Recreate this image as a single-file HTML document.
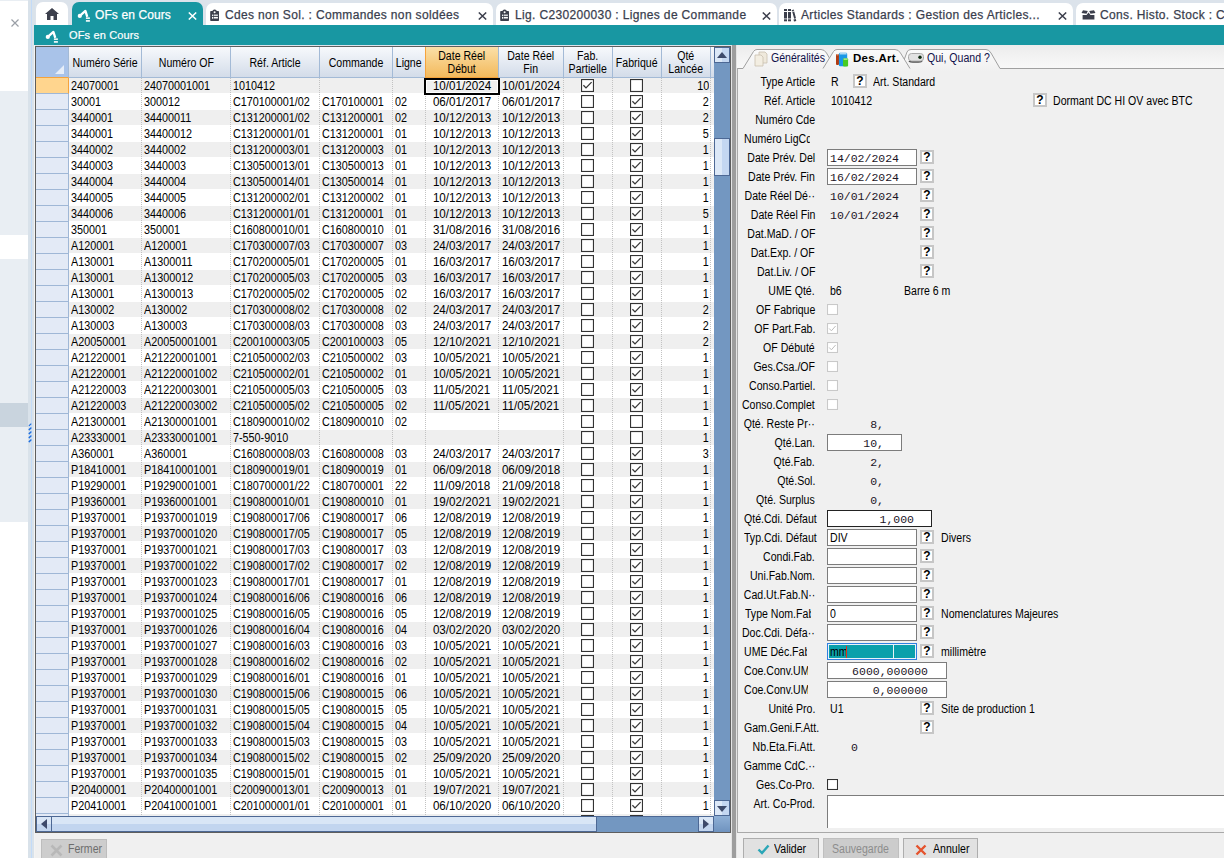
<!DOCTYPE html>
<html><head><meta charset="utf-8"><title>OFs en Cours</title>
<style>
*{box-sizing:border-box}
html,body{margin:0;padding:0}
body{width:1224px;height:858px;position:relative;overflow:hidden;background:#dce3eb;font-family:"Liberation Sans",sans-serif;color:#000}
.ab{position:absolute}
.s{display:inline-block;white-space:nowrap}
.tab{position:absolute;top:2px;height:23px;background:#fff;border-radius:7px 7px 0 0;font-size:12px;letter-spacing:.35px;color:#3a3e4e;white-space:nowrap;overflow:hidden}
.tab .t{position:absolute;top:5px;-webkit-text-stroke:.25px currentColor}
.tab .x{position:absolute;top:4px;font-size:13px;color:#444;letter-spacing:0}
.g{font-size:12px;white-space:nowrap}
.r{position:absolute;left:69px;width:645px;height:16px;border-top:1px solid #fff}
.c{position:absolute;top:1px;overflow:hidden}
.rh{position:absolute;left:36px;width:33px;height:16px;background:#e3eaf6;border-bottom:1px solid #9fb7d6}
.hd{position:absolute;top:47px;height:31px;background:linear-gradient(#f7f9fc,#d3dce9);border-right:1px solid #a3bad6;border-bottom:1px solid #a3bad6;font-size:12px;text-align:center;line-height:13px;padding-top:2px;display:flex;align-items:center;justify-content:center}
.lbl{position:absolute;left:738px;width:77px;text-align:right;font-size:11px;white-space:nowrap;overflow:hidden}
.fv{position:absolute;font-size:11px;white-space:nowrap}
.q{position:absolute;width:14px;height:15px;background:#fff;border:2px solid #c8c8c8;font:bold 11px "Liberation Sans",sans-serif;text-align:center;line-height:11px}
.in{position:absolute;height:18px;background:#fff;border:1px solid #7a7a7a}
.mono{font-family:"Liberation Mono",monospace;font-size:11px;color:#402040}
</style></head><body>

<div class="ab" style="left:0;top:0;width:28px;height:858px;background:#e9eef3"></div>
<div class="ab" style="left:0;top:1px;width:28px;height:90px;background:#fff"></div>
<div class="ab" style="left:0;top:235px;width:28px;height:24px;background:#fff"></div>
<div class="ab" style="left:0;top:403px;width:28px;height:24px;background:#c9d4de"></div>
<div class="ab" style="left:0;top:522px;width:28px;height:336px;background:#fff"></div>
<svg class="ab" style="left:10px;top:18px" width="10" height="10"><path d="M1.5 1.5L8.5 8.5M8.5 1.5L1.5 8.5" stroke="#9a9fa6" stroke-width="1.2"/></svg>
<div class="ab" style="left:28px;top:0;width:7px;height:858px;background:#d9e2ea"></div>
<div class="ab" style="left:34px;top:45px;width:1px;height:813px;background:#f3f3f3"></div>
<div class="ab" style="left:31px;top:0;width:1px;height:858px;background:#c3dbf8"></div>
<svg class="ab" style="left:28px;top:421px" width="5" height="24"><path d="M1.2 4.6 L2.9 3.0" stroke="#1f6fe0" stroke-width="1.15" stroke-linecap="round"/><path d="M1.2 8.6 L2.9 7.0" stroke="#1f6fe0" stroke-width="1.5" stroke-linecap="round"/><path d="M1.2 12.6 L2.9 11.0" stroke="#1f6fe0" stroke-width="1.5" stroke-linecap="round"/><path d="M1.2 16.6 L2.9 15.0" stroke="#1f6fe0" stroke-width="1.5" stroke-linecap="round"/><path d="M1.2 20.6 L2.9 19.0" stroke="#1f6fe0" stroke-width="1.5" stroke-linecap="round"/></svg>
<div class="ab" style="left:35px;top:0;width:1189px;height:25px;background:#dce3eb"></div>
<div class="tab" style="left:36px;width:32px;"><svg class="ab" style="left:9px;top:6px" width="14" height="12" viewBox="0 0 14 12"><path d="M7 0 L14 6 L12 6 L12 12 L8.5 12 L8.5 8 L5.5 8 L5.5 12 L2 12 L2 6 L0 6 Z" fill="#3c3f4c"/></svg></div>
<div class="tab" style="left:72px;width:131px;top:2px;background:#1897a2;color:#fff;height:24px"><span class="t" style="left:23px;top:6px;letter-spacing:.1px">OFs en Cours</span></div>
<div class="tab" style="left:206px;width:287px;top:3px;height:22px"><svg class="ab" style="left:4px;top:6px" width="10" height="13" viewBox="0 0 10 13"><rect x="0.2" y="2" width="8.8" height="10" rx="0.8" fill="#3c3f4c"/><path d="M2.6 3 L2.6 1.5 Q4.6 -0.5 6.6 1.5 L6.6 3 Z" fill="#3c3f4c"/><circle cx="4.6" cy="3.2" r="1" fill="#fff"/><rect x="2" y="5.6" width="1.3" height="1.3" fill="#fff"/><rect x="3.9" y="5.6" width="4" height="1.2" fill="#fff"/><rect x="2" y="7.9" width="1.3" height="1.8" fill="#fff"/><rect x="3.9" y="7.9" width="4" height="1.6" fill="#fff"/></svg><span class="t" style="left:19px;top:5px">Cdes non Sol. : Commandes non soldées</span></div>
<div class="tab" style="left:496px;width:281px;top:3px;height:22px"><svg class="ab" style="left:4px;top:6px" width="10" height="13" viewBox="0 0 10 13"><rect x="0.2" y="2" width="8.8" height="10" rx="0.8" fill="#3c3f4c"/><path d="M2.6 3 L2.6 1.5 Q4.6 -0.5 6.6 1.5 L6.6 3 Z" fill="#3c3f4c"/><circle cx="4.6" cy="3.2" r="1" fill="#fff"/><rect x="2" y="5.6" width="1.3" height="1.3" fill="#fff"/><rect x="3.9" y="5.6" width="4" height="1.2" fill="#fff"/><rect x="2" y="7.9" width="1.3" height="1.8" fill="#fff"/><rect x="3.9" y="7.9" width="4" height="1.6" fill="#fff"/></svg><span class="t" style="left:19px;top:5px">Lig. C230200030 : Lignes de Commande</span></div>
<div class="tab" style="left:779px;width:294px;top:3px;height:22px"><svg class="ab" style="left:5px;top:6px" width="13" height="13" viewBox="0 0 13 13"><rect x="0" y="0" width="3" height="2" fill="#3c3f4c"/><rect x="0" y="3" width="3" height="6.5" fill="#3c3f4c"/><rect x="0" y="10.3" width="3" height="2" fill="#3c3f4c"/><rect x="4" y="0" width="3" height="2" fill="#3c3f4c"/><rect x="4" y="3" width="3" height="6.5" fill="#3c3f4c"/><rect x="4" y="10.3" width="3" height="2" fill="#3c3f4c"/><path d="M7.6 1.2 L9.6 0.4 L10.2 1.6 L8.2 2.4 Z M8.3 3 L10.2 2.4 L12 9.3 L10.2 9.8 Z M9.5 10.5 L11.8 10 L12.3 12 L10 12.4 Z" fill="#3c3f4c"/></svg><span class="t" style="left:22px;top:5px">Articles Standards : Gestion des Articles...</span></div>
<div class="tab" style="left:1076px;width:160px;top:3px;height:22px"><svg class="ab" style="left:5px;top:7px" width="15" height="11" viewBox="0 0 15 11"><path d="M0.5 3 L2 0.3 L6.8 1 L5.5 3.8 Z M14.5 3 L13 0.3 L8.2 1 L9.5 3.8 Z" fill="#3c3f4c"/><path d="M1.6 5 L5.5 5 L7.5 2.4 L9.5 5 L13.4 5 L13.4 9.5 L1.6 9.5 Z" fill="#3c3f4c"/></svg><span class="t" style="left:24px;top:5px">Cons. Histo. Stock : C</span></div>
<svg class="ab" style="left:188px;top:12px" width="9" height="8" viewBox="0 0 9 8"><path d="M0.8 0.5 L8.2 7.5 M8.2 0.5 L0.8 7.5" stroke="#fff" stroke-width="1.5"/></svg>
<svg class="ab" style="left:478px;top:12px" width="9" height="8" viewBox="0 0 9 8"><path d="M0.8 0.5 L8.2 7.5 M8.2 0.5 L0.8 7.5" stroke="#3c3f4c" stroke-width="1.5"/></svg>
<svg class="ab" style="left:762px;top:12px" width="9" height="8" viewBox="0 0 9 8"><path d="M0.8 0.5 L8.2 7.5 M8.2 0.5 L0.8 7.5" stroke="#3c3f4c" stroke-width="1.5"/></svg>
<svg class="ab" style="left:1058px;top:12px" width="9" height="8" viewBox="0 0 9 8"><path d="M0.8 0.5 L8.2 7.5 M8.2 0.5 L0.8 7.5" stroke="#3c3f4c" stroke-width="1.5"/></svg>
<div class="ab" style="left:34px;top:25px;width:1190px;height:20px;background:#1897a2"></div>
<svg class="ab" style="left:45px;top:29px" width="15" height="15" viewBox="0 0 15 15"><path d="M2.8 7.9 L8.4 2.9 L10.3 8.8" fill="none" stroke="#fff" stroke-width="2.3" stroke-linejoin="round"/><circle cx="2.8" cy="7.9" r="2.1" fill="#fff"/><rect x="8.9" y="9.4" width="4" height="1.5" fill="#fff"/><rect x="8.9" y="12.1" width="4" height="1.6" fill="#fff"/></svg>
<svg class="ab" style="left:77px;top:8px" width="15" height="15" viewBox="0 0 15 15"><path d="M2.8 7.9 L8.4 2.9 L10.3 8.8" fill="none" stroke="#fff" stroke-width="2.3" stroke-linejoin="round"/><circle cx="2.8" cy="7.9" r="2.1" fill="#fff"/><rect x="8.9" y="9.4" width="4" height="1.5" fill="#fff"/><rect x="8.9" y="12.1" width="4" height="1.6" fill="#fff"/></svg>
<div class="ab" style="left:69px;top:29px;font-size:11px;color:#fff;letter-spacing:.15px;white-space:nowrap;-webkit-text-stroke:.2px #fff">OFs en Cours</div>
<div class="ab" style="left:35px;top:46px;width:696px;height:787px;border:1px solid #5e5e5e;background:#fff;overflow:hidden"></div>
<div class="r g" style="top:77px;background:#efefef">
<div class="c" style="left:2px;width:68px;text-align:left"><span class="s" style="transform:scaleX(0.9);transform-origin:0 0">24070001</span></div>
<div class="c" style="left:75px;width:84px;text-align:left"><span class="s" style="transform:scaleX(0.9);transform-origin:0 0">24070001001</span></div>
<div class="c" style="left:164px;width:84px;text-align:left"><span class="s" style="transform:scaleX(0.9);transform-origin:0 0">1010412</span></div>
<div class="c" style="left:253px;width:68px;text-align:left"><span class="s" style="transform:scaleX(0.9);transform-origin:0 0"></span></div>
<div class="c" style="left:326px;width:28px;text-align:left"><span class="s" style="transform:scaleX(0.9);transform-origin:0 0"></span></div>
<div class="c" style="left:358px;width:70px;text-align:center"><span class="s" style="transform:scaleX(0.97);transform-origin:50% 0">10/01/2024</span></div>
<div class="c" style="left:431px;width:62px;text-align:center"><span class="s" style="transform:scaleX(0.97);transform-origin:50% 0">10/01/2024</span></div>
<div class="ab" style="left:512px;top:1px"><svg width="13" height="13" viewBox="0 0 13 13"><rect x="0.5" y="0.5" width="12" height="12" fill="#fff" stroke="#333" stroke-width="1.2"/><path d="M2.4 6.3 L5 8.9 L10.6 3.1" fill="none" stroke="#383838" stroke-width="1.3"/></svg></div>
<div class="ab" style="left:561px;top:1px"><svg width="13" height="13" viewBox="0 0 13 13"><rect x="0.5" y="0.5" width="12" height="12" fill="#fff" stroke="#333" stroke-width="1.2"/></svg></div>
<div class="c" style="left:594px;width:46px;text-align:right"><span class="s" style="transform:scaleX(0.9);transform-origin:100% 0">10</span></div>
</div>
<div class="r g" style="top:93px;background:#ffffff">
<div class="c" style="left:2px;width:68px;text-align:left"><span class="s" style="transform:scaleX(0.9);transform-origin:0 0">30001</span></div>
<div class="c" style="left:75px;width:84px;text-align:left"><span class="s" style="transform:scaleX(0.9);transform-origin:0 0">300012</span></div>
<div class="c" style="left:164px;width:84px;text-align:left"><span class="s" style="transform:scaleX(0.9);transform-origin:0 0">C170100001/02</span></div>
<div class="c" style="left:253px;width:68px;text-align:left"><span class="s" style="transform:scaleX(0.9);transform-origin:0 0">C170100001</span></div>
<div class="c" style="left:326px;width:28px;text-align:left"><span class="s" style="transform:scaleX(0.9);transform-origin:0 0">02</span></div>
<div class="c" style="left:358px;width:70px;text-align:center"><span class="s" style="transform:scaleX(0.97);transform-origin:50% 0">06/01/2017</span></div>
<div class="c" style="left:431px;width:62px;text-align:center"><span class="s" style="transform:scaleX(0.97);transform-origin:50% 0">06/01/2017</span></div>
<div class="ab" style="left:512px;top:1px"><svg width="13" height="13" viewBox="0 0 13 13"><rect x="0.5" y="0.5" width="12" height="12" fill="#fff" stroke="#333" stroke-width="1.2"/></svg></div>
<div class="ab" style="left:561px;top:1px"><svg width="13" height="13" viewBox="0 0 13 13"><rect x="0.5" y="0.5" width="12" height="12" fill="#fff" stroke="#333" stroke-width="1.2"/><path d="M2.4 6.3 L5 8.9 L10.6 3.1" fill="none" stroke="#383838" stroke-width="1.3"/></svg></div>
<div class="c" style="left:594px;width:46px;text-align:right"><span class="s" style="transform:scaleX(0.9);transform-origin:100% 0">2</span></div>
</div>
<div class="r g" style="top:109px;background:#efefef">
<div class="c" style="left:2px;width:68px;text-align:left"><span class="s" style="transform:scaleX(0.9);transform-origin:0 0">3440001</span></div>
<div class="c" style="left:75px;width:84px;text-align:left"><span class="s" style="transform:scaleX(0.9);transform-origin:0 0">34400011</span></div>
<div class="c" style="left:164px;width:84px;text-align:left"><span class="s" style="transform:scaleX(0.9);transform-origin:0 0">C131200001/02</span></div>
<div class="c" style="left:253px;width:68px;text-align:left"><span class="s" style="transform:scaleX(0.9);transform-origin:0 0">C131200001</span></div>
<div class="c" style="left:326px;width:28px;text-align:left"><span class="s" style="transform:scaleX(0.9);transform-origin:0 0">02</span></div>
<div class="c" style="left:358px;width:70px;text-align:center"><span class="s" style="transform:scaleX(0.97);transform-origin:50% 0">10/12/2013</span></div>
<div class="c" style="left:431px;width:62px;text-align:center"><span class="s" style="transform:scaleX(0.97);transform-origin:50% 0">10/12/2013</span></div>
<div class="ab" style="left:512px;top:1px"><svg width="13" height="13" viewBox="0 0 13 13"><rect x="0.5" y="0.5" width="12" height="12" fill="#fff" stroke="#333" stroke-width="1.2"/></svg></div>
<div class="ab" style="left:561px;top:1px"><svg width="13" height="13" viewBox="0 0 13 13"><rect x="0.5" y="0.5" width="12" height="12" fill="#fff" stroke="#333" stroke-width="1.2"/><path d="M2.4 6.3 L5 8.9 L10.6 3.1" fill="none" stroke="#383838" stroke-width="1.3"/></svg></div>
<div class="c" style="left:594px;width:46px;text-align:right"><span class="s" style="transform:scaleX(0.9);transform-origin:100% 0">2</span></div>
</div>
<div class="r g" style="top:125px;background:#ffffff">
<div class="c" style="left:2px;width:68px;text-align:left"><span class="s" style="transform:scaleX(0.9);transform-origin:0 0">3440001</span></div>
<div class="c" style="left:75px;width:84px;text-align:left"><span class="s" style="transform:scaleX(0.9);transform-origin:0 0">34400012</span></div>
<div class="c" style="left:164px;width:84px;text-align:left"><span class="s" style="transform:scaleX(0.9);transform-origin:0 0">C131200001/01</span></div>
<div class="c" style="left:253px;width:68px;text-align:left"><span class="s" style="transform:scaleX(0.9);transform-origin:0 0">C131200001</span></div>
<div class="c" style="left:326px;width:28px;text-align:left"><span class="s" style="transform:scaleX(0.9);transform-origin:0 0">01</span></div>
<div class="c" style="left:358px;width:70px;text-align:center"><span class="s" style="transform:scaleX(0.97);transform-origin:50% 0">10/12/2013</span></div>
<div class="c" style="left:431px;width:62px;text-align:center"><span class="s" style="transform:scaleX(0.97);transform-origin:50% 0">10/12/2013</span></div>
<div class="ab" style="left:512px;top:1px"><svg width="13" height="13" viewBox="0 0 13 13"><rect x="0.5" y="0.5" width="12" height="12" fill="#fff" stroke="#333" stroke-width="1.2"/></svg></div>
<div class="ab" style="left:561px;top:1px"><svg width="13" height="13" viewBox="0 0 13 13"><rect x="0.5" y="0.5" width="12" height="12" fill="#fff" stroke="#333" stroke-width="1.2"/><path d="M2.4 6.3 L5 8.9 L10.6 3.1" fill="none" stroke="#383838" stroke-width="1.3"/></svg></div>
<div class="c" style="left:594px;width:46px;text-align:right"><span class="s" style="transform:scaleX(0.9);transform-origin:100% 0">5</span></div>
</div>
<div class="r g" style="top:141px;background:#efefef">
<div class="c" style="left:2px;width:68px;text-align:left"><span class="s" style="transform:scaleX(0.9);transform-origin:0 0">3440002</span></div>
<div class="c" style="left:75px;width:84px;text-align:left"><span class="s" style="transform:scaleX(0.9);transform-origin:0 0">3440002</span></div>
<div class="c" style="left:164px;width:84px;text-align:left"><span class="s" style="transform:scaleX(0.9);transform-origin:0 0">C131200003/01</span></div>
<div class="c" style="left:253px;width:68px;text-align:left"><span class="s" style="transform:scaleX(0.9);transform-origin:0 0">C131200003</span></div>
<div class="c" style="left:326px;width:28px;text-align:left"><span class="s" style="transform:scaleX(0.9);transform-origin:0 0">01</span></div>
<div class="c" style="left:358px;width:70px;text-align:center"><span class="s" style="transform:scaleX(0.97);transform-origin:50% 0">10/12/2013</span></div>
<div class="c" style="left:431px;width:62px;text-align:center"><span class="s" style="transform:scaleX(0.97);transform-origin:50% 0">10/12/2013</span></div>
<div class="ab" style="left:512px;top:1px"><svg width="13" height="13" viewBox="0 0 13 13"><rect x="0.5" y="0.5" width="12" height="12" fill="#fff" stroke="#333" stroke-width="1.2"/></svg></div>
<div class="ab" style="left:561px;top:1px"><svg width="13" height="13" viewBox="0 0 13 13"><rect x="0.5" y="0.5" width="12" height="12" fill="#fff" stroke="#333" stroke-width="1.2"/><path d="M2.4 6.3 L5 8.9 L10.6 3.1" fill="none" stroke="#383838" stroke-width="1.3"/></svg></div>
<div class="c" style="left:594px;width:46px;text-align:right"><span class="s" style="transform:scaleX(0.9);transform-origin:100% 0">1</span></div>
</div>
<div class="r g" style="top:157px;background:#ffffff">
<div class="c" style="left:2px;width:68px;text-align:left"><span class="s" style="transform:scaleX(0.9);transform-origin:0 0">3440003</span></div>
<div class="c" style="left:75px;width:84px;text-align:left"><span class="s" style="transform:scaleX(0.9);transform-origin:0 0">3440003</span></div>
<div class="c" style="left:164px;width:84px;text-align:left"><span class="s" style="transform:scaleX(0.9);transform-origin:0 0">C130500013/01</span></div>
<div class="c" style="left:253px;width:68px;text-align:left"><span class="s" style="transform:scaleX(0.9);transform-origin:0 0">C130500013</span></div>
<div class="c" style="left:326px;width:28px;text-align:left"><span class="s" style="transform:scaleX(0.9);transform-origin:0 0">01</span></div>
<div class="c" style="left:358px;width:70px;text-align:center"><span class="s" style="transform:scaleX(0.97);transform-origin:50% 0">10/12/2013</span></div>
<div class="c" style="left:431px;width:62px;text-align:center"><span class="s" style="transform:scaleX(0.97);transform-origin:50% 0">10/12/2013</span></div>
<div class="ab" style="left:512px;top:1px"><svg width="13" height="13" viewBox="0 0 13 13"><rect x="0.5" y="0.5" width="12" height="12" fill="#fff" stroke="#333" stroke-width="1.2"/></svg></div>
<div class="ab" style="left:561px;top:1px"><svg width="13" height="13" viewBox="0 0 13 13"><rect x="0.5" y="0.5" width="12" height="12" fill="#fff" stroke="#333" stroke-width="1.2"/><path d="M2.4 6.3 L5 8.9 L10.6 3.1" fill="none" stroke="#383838" stroke-width="1.3"/></svg></div>
<div class="c" style="left:594px;width:46px;text-align:right"><span class="s" style="transform:scaleX(0.9);transform-origin:100% 0">1</span></div>
</div>
<div class="r g" style="top:173px;background:#efefef">
<div class="c" style="left:2px;width:68px;text-align:left"><span class="s" style="transform:scaleX(0.9);transform-origin:0 0">3440004</span></div>
<div class="c" style="left:75px;width:84px;text-align:left"><span class="s" style="transform:scaleX(0.9);transform-origin:0 0">3440004</span></div>
<div class="c" style="left:164px;width:84px;text-align:left"><span class="s" style="transform:scaleX(0.9);transform-origin:0 0">C130500014/01</span></div>
<div class="c" style="left:253px;width:68px;text-align:left"><span class="s" style="transform:scaleX(0.9);transform-origin:0 0">C130500014</span></div>
<div class="c" style="left:326px;width:28px;text-align:left"><span class="s" style="transform:scaleX(0.9);transform-origin:0 0">01</span></div>
<div class="c" style="left:358px;width:70px;text-align:center"><span class="s" style="transform:scaleX(0.97);transform-origin:50% 0">10/12/2013</span></div>
<div class="c" style="left:431px;width:62px;text-align:center"><span class="s" style="transform:scaleX(0.97);transform-origin:50% 0">10/12/2013</span></div>
<div class="ab" style="left:512px;top:1px"><svg width="13" height="13" viewBox="0 0 13 13"><rect x="0.5" y="0.5" width="12" height="12" fill="#fff" stroke="#333" stroke-width="1.2"/></svg></div>
<div class="ab" style="left:561px;top:1px"><svg width="13" height="13" viewBox="0 0 13 13"><rect x="0.5" y="0.5" width="12" height="12" fill="#fff" stroke="#333" stroke-width="1.2"/><path d="M2.4 6.3 L5 8.9 L10.6 3.1" fill="none" stroke="#383838" stroke-width="1.3"/></svg></div>
<div class="c" style="left:594px;width:46px;text-align:right"><span class="s" style="transform:scaleX(0.9);transform-origin:100% 0">1</span></div>
</div>
<div class="r g" style="top:189px;background:#ffffff">
<div class="c" style="left:2px;width:68px;text-align:left"><span class="s" style="transform:scaleX(0.9);transform-origin:0 0">3440005</span></div>
<div class="c" style="left:75px;width:84px;text-align:left"><span class="s" style="transform:scaleX(0.9);transform-origin:0 0">3440005</span></div>
<div class="c" style="left:164px;width:84px;text-align:left"><span class="s" style="transform:scaleX(0.9);transform-origin:0 0">C131200002/01</span></div>
<div class="c" style="left:253px;width:68px;text-align:left"><span class="s" style="transform:scaleX(0.9);transform-origin:0 0">C131200002</span></div>
<div class="c" style="left:326px;width:28px;text-align:left"><span class="s" style="transform:scaleX(0.9);transform-origin:0 0">01</span></div>
<div class="c" style="left:358px;width:70px;text-align:center"><span class="s" style="transform:scaleX(0.97);transform-origin:50% 0">10/12/2013</span></div>
<div class="c" style="left:431px;width:62px;text-align:center"><span class="s" style="transform:scaleX(0.97);transform-origin:50% 0">10/12/2013</span></div>
<div class="ab" style="left:512px;top:1px"><svg width="13" height="13" viewBox="0 0 13 13"><rect x="0.5" y="0.5" width="12" height="12" fill="#fff" stroke="#333" stroke-width="1.2"/></svg></div>
<div class="ab" style="left:561px;top:1px"><svg width="13" height="13" viewBox="0 0 13 13"><rect x="0.5" y="0.5" width="12" height="12" fill="#fff" stroke="#333" stroke-width="1.2"/><path d="M2.4 6.3 L5 8.9 L10.6 3.1" fill="none" stroke="#383838" stroke-width="1.3"/></svg></div>
<div class="c" style="left:594px;width:46px;text-align:right"><span class="s" style="transform:scaleX(0.9);transform-origin:100% 0">1</span></div>
</div>
<div class="r g" style="top:205px;background:#efefef">
<div class="c" style="left:2px;width:68px;text-align:left"><span class="s" style="transform:scaleX(0.9);transform-origin:0 0">3440006</span></div>
<div class="c" style="left:75px;width:84px;text-align:left"><span class="s" style="transform:scaleX(0.9);transform-origin:0 0">3440006</span></div>
<div class="c" style="left:164px;width:84px;text-align:left"><span class="s" style="transform:scaleX(0.9);transform-origin:0 0">C131200001/01</span></div>
<div class="c" style="left:253px;width:68px;text-align:left"><span class="s" style="transform:scaleX(0.9);transform-origin:0 0">C131200001</span></div>
<div class="c" style="left:326px;width:28px;text-align:left"><span class="s" style="transform:scaleX(0.9);transform-origin:0 0">01</span></div>
<div class="c" style="left:358px;width:70px;text-align:center"><span class="s" style="transform:scaleX(0.97);transform-origin:50% 0">10/12/2013</span></div>
<div class="c" style="left:431px;width:62px;text-align:center"><span class="s" style="transform:scaleX(0.97);transform-origin:50% 0">10/12/2013</span></div>
<div class="ab" style="left:512px;top:1px"><svg width="13" height="13" viewBox="0 0 13 13"><rect x="0.5" y="0.5" width="12" height="12" fill="#fff" stroke="#333" stroke-width="1.2"/></svg></div>
<div class="ab" style="left:561px;top:1px"><svg width="13" height="13" viewBox="0 0 13 13"><rect x="0.5" y="0.5" width="12" height="12" fill="#fff" stroke="#333" stroke-width="1.2"/><path d="M2.4 6.3 L5 8.9 L10.6 3.1" fill="none" stroke="#383838" stroke-width="1.3"/></svg></div>
<div class="c" style="left:594px;width:46px;text-align:right"><span class="s" style="transform:scaleX(0.9);transform-origin:100% 0">5</span></div>
</div>
<div class="r g" style="top:221px;background:#ffffff">
<div class="c" style="left:2px;width:68px;text-align:left"><span class="s" style="transform:scaleX(0.9);transform-origin:0 0">350001</span></div>
<div class="c" style="left:75px;width:84px;text-align:left"><span class="s" style="transform:scaleX(0.9);transform-origin:0 0">350001</span></div>
<div class="c" style="left:164px;width:84px;text-align:left"><span class="s" style="transform:scaleX(0.9);transform-origin:0 0">C160800010/01</span></div>
<div class="c" style="left:253px;width:68px;text-align:left"><span class="s" style="transform:scaleX(0.9);transform-origin:0 0">C160800010</span></div>
<div class="c" style="left:326px;width:28px;text-align:left"><span class="s" style="transform:scaleX(0.9);transform-origin:0 0">01</span></div>
<div class="c" style="left:358px;width:70px;text-align:center"><span class="s" style="transform:scaleX(0.97);transform-origin:50% 0">31/08/2016</span></div>
<div class="c" style="left:431px;width:62px;text-align:center"><span class="s" style="transform:scaleX(0.97);transform-origin:50% 0">31/08/2016</span></div>
<div class="ab" style="left:512px;top:1px"><svg width="13" height="13" viewBox="0 0 13 13"><rect x="0.5" y="0.5" width="12" height="12" fill="#fff" stroke="#333" stroke-width="1.2"/></svg></div>
<div class="ab" style="left:561px;top:1px"><svg width="13" height="13" viewBox="0 0 13 13"><rect x="0.5" y="0.5" width="12" height="12" fill="#fff" stroke="#333" stroke-width="1.2"/><path d="M2.4 6.3 L5 8.9 L10.6 3.1" fill="none" stroke="#383838" stroke-width="1.3"/></svg></div>
<div class="c" style="left:594px;width:46px;text-align:right"><span class="s" style="transform:scaleX(0.9);transform-origin:100% 0">1</span></div>
</div>
<div class="r g" style="top:237px;background:#efefef">
<div class="c" style="left:2px;width:68px;text-align:left"><span class="s" style="transform:scaleX(0.9);transform-origin:0 0">A120001</span></div>
<div class="c" style="left:75px;width:84px;text-align:left"><span class="s" style="transform:scaleX(0.9);transform-origin:0 0">A120001</span></div>
<div class="c" style="left:164px;width:84px;text-align:left"><span class="s" style="transform:scaleX(0.9);transform-origin:0 0">C170300007/03</span></div>
<div class="c" style="left:253px;width:68px;text-align:left"><span class="s" style="transform:scaleX(0.9);transform-origin:0 0">C170300007</span></div>
<div class="c" style="left:326px;width:28px;text-align:left"><span class="s" style="transform:scaleX(0.9);transform-origin:0 0">03</span></div>
<div class="c" style="left:358px;width:70px;text-align:center"><span class="s" style="transform:scaleX(0.97);transform-origin:50% 0">24/03/2017</span></div>
<div class="c" style="left:431px;width:62px;text-align:center"><span class="s" style="transform:scaleX(0.97);transform-origin:50% 0">24/03/2017</span></div>
<div class="ab" style="left:512px;top:1px"><svg width="13" height="13" viewBox="0 0 13 13"><rect x="0.5" y="0.5" width="12" height="12" fill="#fff" stroke="#333" stroke-width="1.2"/></svg></div>
<div class="ab" style="left:561px;top:1px"><svg width="13" height="13" viewBox="0 0 13 13"><rect x="0.5" y="0.5" width="12" height="12" fill="#fff" stroke="#333" stroke-width="1.2"/><path d="M2.4 6.3 L5 8.9 L10.6 3.1" fill="none" stroke="#383838" stroke-width="1.3"/></svg></div>
<div class="c" style="left:594px;width:46px;text-align:right"><span class="s" style="transform:scaleX(0.9);transform-origin:100% 0">1</span></div>
</div>
<div class="r g" style="top:253px;background:#ffffff">
<div class="c" style="left:2px;width:68px;text-align:left"><span class="s" style="transform:scaleX(0.9);transform-origin:0 0">A130001</span></div>
<div class="c" style="left:75px;width:84px;text-align:left"><span class="s" style="transform:scaleX(0.9);transform-origin:0 0">A1300011</span></div>
<div class="c" style="left:164px;width:84px;text-align:left"><span class="s" style="transform:scaleX(0.9);transform-origin:0 0">C170200005/01</span></div>
<div class="c" style="left:253px;width:68px;text-align:left"><span class="s" style="transform:scaleX(0.9);transform-origin:0 0">C170200005</span></div>
<div class="c" style="left:326px;width:28px;text-align:left"><span class="s" style="transform:scaleX(0.9);transform-origin:0 0">01</span></div>
<div class="c" style="left:358px;width:70px;text-align:center"><span class="s" style="transform:scaleX(0.97);transform-origin:50% 0">16/03/2017</span></div>
<div class="c" style="left:431px;width:62px;text-align:center"><span class="s" style="transform:scaleX(0.97);transform-origin:50% 0">16/03/2017</span></div>
<div class="ab" style="left:512px;top:1px"><svg width="13" height="13" viewBox="0 0 13 13"><rect x="0.5" y="0.5" width="12" height="12" fill="#fff" stroke="#333" stroke-width="1.2"/></svg></div>
<div class="ab" style="left:561px;top:1px"><svg width="13" height="13" viewBox="0 0 13 13"><rect x="0.5" y="0.5" width="12" height="12" fill="#fff" stroke="#333" stroke-width="1.2"/><path d="M2.4 6.3 L5 8.9 L10.6 3.1" fill="none" stroke="#383838" stroke-width="1.3"/></svg></div>
<div class="c" style="left:594px;width:46px;text-align:right"><span class="s" style="transform:scaleX(0.9);transform-origin:100% 0">1</span></div>
</div>
<div class="r g" style="top:269px;background:#efefef">
<div class="c" style="left:2px;width:68px;text-align:left"><span class="s" style="transform:scaleX(0.9);transform-origin:0 0">A130001</span></div>
<div class="c" style="left:75px;width:84px;text-align:left"><span class="s" style="transform:scaleX(0.9);transform-origin:0 0">A1300012</span></div>
<div class="c" style="left:164px;width:84px;text-align:left"><span class="s" style="transform:scaleX(0.9);transform-origin:0 0">C170200005/03</span></div>
<div class="c" style="left:253px;width:68px;text-align:left"><span class="s" style="transform:scaleX(0.9);transform-origin:0 0">C170200005</span></div>
<div class="c" style="left:326px;width:28px;text-align:left"><span class="s" style="transform:scaleX(0.9);transform-origin:0 0">03</span></div>
<div class="c" style="left:358px;width:70px;text-align:center"><span class="s" style="transform:scaleX(0.97);transform-origin:50% 0">16/03/2017</span></div>
<div class="c" style="left:431px;width:62px;text-align:center"><span class="s" style="transform:scaleX(0.97);transform-origin:50% 0">16/03/2017</span></div>
<div class="ab" style="left:512px;top:1px"><svg width="13" height="13" viewBox="0 0 13 13"><rect x="0.5" y="0.5" width="12" height="12" fill="#fff" stroke="#333" stroke-width="1.2"/></svg></div>
<div class="ab" style="left:561px;top:1px"><svg width="13" height="13" viewBox="0 0 13 13"><rect x="0.5" y="0.5" width="12" height="12" fill="#fff" stroke="#333" stroke-width="1.2"/><path d="M2.4 6.3 L5 8.9 L10.6 3.1" fill="none" stroke="#383838" stroke-width="1.3"/></svg></div>
<div class="c" style="left:594px;width:46px;text-align:right"><span class="s" style="transform:scaleX(0.9);transform-origin:100% 0">1</span></div>
</div>
<div class="r g" style="top:285px;background:#ffffff">
<div class="c" style="left:2px;width:68px;text-align:left"><span class="s" style="transform:scaleX(0.9);transform-origin:0 0">A130001</span></div>
<div class="c" style="left:75px;width:84px;text-align:left"><span class="s" style="transform:scaleX(0.9);transform-origin:0 0">A1300013</span></div>
<div class="c" style="left:164px;width:84px;text-align:left"><span class="s" style="transform:scaleX(0.9);transform-origin:0 0">C170200005/02</span></div>
<div class="c" style="left:253px;width:68px;text-align:left"><span class="s" style="transform:scaleX(0.9);transform-origin:0 0">C170200005</span></div>
<div class="c" style="left:326px;width:28px;text-align:left"><span class="s" style="transform:scaleX(0.9);transform-origin:0 0">02</span></div>
<div class="c" style="left:358px;width:70px;text-align:center"><span class="s" style="transform:scaleX(0.97);transform-origin:50% 0">16/03/2017</span></div>
<div class="c" style="left:431px;width:62px;text-align:center"><span class="s" style="transform:scaleX(0.97);transform-origin:50% 0">16/03/2017</span></div>
<div class="ab" style="left:512px;top:1px"><svg width="13" height="13" viewBox="0 0 13 13"><rect x="0.5" y="0.5" width="12" height="12" fill="#fff" stroke="#333" stroke-width="1.2"/></svg></div>
<div class="ab" style="left:561px;top:1px"><svg width="13" height="13" viewBox="0 0 13 13"><rect x="0.5" y="0.5" width="12" height="12" fill="#fff" stroke="#333" stroke-width="1.2"/><path d="M2.4 6.3 L5 8.9 L10.6 3.1" fill="none" stroke="#383838" stroke-width="1.3"/></svg></div>
<div class="c" style="left:594px;width:46px;text-align:right"><span class="s" style="transform:scaleX(0.9);transform-origin:100% 0">1</span></div>
</div>
<div class="r g" style="top:301px;background:#efefef">
<div class="c" style="left:2px;width:68px;text-align:left"><span class="s" style="transform:scaleX(0.9);transform-origin:0 0">A130002</span></div>
<div class="c" style="left:75px;width:84px;text-align:left"><span class="s" style="transform:scaleX(0.9);transform-origin:0 0">A130002</span></div>
<div class="c" style="left:164px;width:84px;text-align:left"><span class="s" style="transform:scaleX(0.9);transform-origin:0 0">C170300008/02</span></div>
<div class="c" style="left:253px;width:68px;text-align:left"><span class="s" style="transform:scaleX(0.9);transform-origin:0 0">C170300008</span></div>
<div class="c" style="left:326px;width:28px;text-align:left"><span class="s" style="transform:scaleX(0.9);transform-origin:0 0">02</span></div>
<div class="c" style="left:358px;width:70px;text-align:center"><span class="s" style="transform:scaleX(0.97);transform-origin:50% 0">24/03/2017</span></div>
<div class="c" style="left:431px;width:62px;text-align:center"><span class="s" style="transform:scaleX(0.97);transform-origin:50% 0">24/03/2017</span></div>
<div class="ab" style="left:512px;top:1px"><svg width="13" height="13" viewBox="0 0 13 13"><rect x="0.5" y="0.5" width="12" height="12" fill="#fff" stroke="#333" stroke-width="1.2"/></svg></div>
<div class="ab" style="left:561px;top:1px"><svg width="13" height="13" viewBox="0 0 13 13"><rect x="0.5" y="0.5" width="12" height="12" fill="#fff" stroke="#333" stroke-width="1.2"/><path d="M2.4 6.3 L5 8.9 L10.6 3.1" fill="none" stroke="#383838" stroke-width="1.3"/></svg></div>
<div class="c" style="left:594px;width:46px;text-align:right"><span class="s" style="transform:scaleX(0.9);transform-origin:100% 0">2</span></div>
</div>
<div class="r g" style="top:317px;background:#ffffff">
<div class="c" style="left:2px;width:68px;text-align:left"><span class="s" style="transform:scaleX(0.9);transform-origin:0 0">A130003</span></div>
<div class="c" style="left:75px;width:84px;text-align:left"><span class="s" style="transform:scaleX(0.9);transform-origin:0 0">A130003</span></div>
<div class="c" style="left:164px;width:84px;text-align:left"><span class="s" style="transform:scaleX(0.9);transform-origin:0 0">C170300008/03</span></div>
<div class="c" style="left:253px;width:68px;text-align:left"><span class="s" style="transform:scaleX(0.9);transform-origin:0 0">C170300008</span></div>
<div class="c" style="left:326px;width:28px;text-align:left"><span class="s" style="transform:scaleX(0.9);transform-origin:0 0">03</span></div>
<div class="c" style="left:358px;width:70px;text-align:center"><span class="s" style="transform:scaleX(0.97);transform-origin:50% 0">24/03/2017</span></div>
<div class="c" style="left:431px;width:62px;text-align:center"><span class="s" style="transform:scaleX(0.97);transform-origin:50% 0">24/03/2017</span></div>
<div class="ab" style="left:512px;top:1px"><svg width="13" height="13" viewBox="0 0 13 13"><rect x="0.5" y="0.5" width="12" height="12" fill="#fff" stroke="#333" stroke-width="1.2"/></svg></div>
<div class="ab" style="left:561px;top:1px"><svg width="13" height="13" viewBox="0 0 13 13"><rect x="0.5" y="0.5" width="12" height="12" fill="#fff" stroke="#333" stroke-width="1.2"/><path d="M2.4 6.3 L5 8.9 L10.6 3.1" fill="none" stroke="#383838" stroke-width="1.3"/></svg></div>
<div class="c" style="left:594px;width:46px;text-align:right"><span class="s" style="transform:scaleX(0.9);transform-origin:100% 0">2</span></div>
</div>
<div class="r g" style="top:333px;background:#efefef">
<div class="c" style="left:2px;width:68px;text-align:left"><span class="s" style="transform:scaleX(0.9);transform-origin:0 0">A20050001</span></div>
<div class="c" style="left:75px;width:84px;text-align:left"><span class="s" style="transform:scaleX(0.9);transform-origin:0 0">A20050001001</span></div>
<div class="c" style="left:164px;width:84px;text-align:left"><span class="s" style="transform:scaleX(0.9);transform-origin:0 0">C200100003/05</span></div>
<div class="c" style="left:253px;width:68px;text-align:left"><span class="s" style="transform:scaleX(0.9);transform-origin:0 0">C200100003</span></div>
<div class="c" style="left:326px;width:28px;text-align:left"><span class="s" style="transform:scaleX(0.9);transform-origin:0 0">05</span></div>
<div class="c" style="left:358px;width:70px;text-align:center"><span class="s" style="transform:scaleX(0.97);transform-origin:50% 0">12/10/2021</span></div>
<div class="c" style="left:431px;width:62px;text-align:center"><span class="s" style="transform:scaleX(0.97);transform-origin:50% 0">12/10/2021</span></div>
<div class="ab" style="left:512px;top:1px"><svg width="13" height="13" viewBox="0 0 13 13"><rect x="0.5" y="0.5" width="12" height="12" fill="#fff" stroke="#333" stroke-width="1.2"/></svg></div>
<div class="ab" style="left:561px;top:1px"><svg width="13" height="13" viewBox="0 0 13 13"><rect x="0.5" y="0.5" width="12" height="12" fill="#fff" stroke="#333" stroke-width="1.2"/><path d="M2.4 6.3 L5 8.9 L10.6 3.1" fill="none" stroke="#383838" stroke-width="1.3"/></svg></div>
<div class="c" style="left:594px;width:46px;text-align:right"><span class="s" style="transform:scaleX(0.9);transform-origin:100% 0">2</span></div>
</div>
<div class="r g" style="top:349px;background:#ffffff">
<div class="c" style="left:2px;width:68px;text-align:left"><span class="s" style="transform:scaleX(0.9);transform-origin:0 0">A21220001</span></div>
<div class="c" style="left:75px;width:84px;text-align:left"><span class="s" style="transform:scaleX(0.9);transform-origin:0 0">A21220001001</span></div>
<div class="c" style="left:164px;width:84px;text-align:left"><span class="s" style="transform:scaleX(0.9);transform-origin:0 0">C210500002/03</span></div>
<div class="c" style="left:253px;width:68px;text-align:left"><span class="s" style="transform:scaleX(0.9);transform-origin:0 0">C210500002</span></div>
<div class="c" style="left:326px;width:28px;text-align:left"><span class="s" style="transform:scaleX(0.9);transform-origin:0 0">03</span></div>
<div class="c" style="left:358px;width:70px;text-align:center"><span class="s" style="transform:scaleX(0.97);transform-origin:50% 0">10/05/2021</span></div>
<div class="c" style="left:431px;width:62px;text-align:center"><span class="s" style="transform:scaleX(0.97);transform-origin:50% 0">10/05/2021</span></div>
<div class="ab" style="left:512px;top:1px"><svg width="13" height="13" viewBox="0 0 13 13"><rect x="0.5" y="0.5" width="12" height="12" fill="#fff" stroke="#333" stroke-width="1.2"/></svg></div>
<div class="ab" style="left:561px;top:1px"><svg width="13" height="13" viewBox="0 0 13 13"><rect x="0.5" y="0.5" width="12" height="12" fill="#fff" stroke="#333" stroke-width="1.2"/><path d="M2.4 6.3 L5 8.9 L10.6 3.1" fill="none" stroke="#383838" stroke-width="1.3"/></svg></div>
<div class="c" style="left:594px;width:46px;text-align:right"><span class="s" style="transform:scaleX(0.9);transform-origin:100% 0">1</span></div>
</div>
<div class="r g" style="top:365px;background:#efefef">
<div class="c" style="left:2px;width:68px;text-align:left"><span class="s" style="transform:scaleX(0.9);transform-origin:0 0">A21220001</span></div>
<div class="c" style="left:75px;width:84px;text-align:left"><span class="s" style="transform:scaleX(0.9);transform-origin:0 0">A21220001002</span></div>
<div class="c" style="left:164px;width:84px;text-align:left"><span class="s" style="transform:scaleX(0.9);transform-origin:0 0">C210500002/01</span></div>
<div class="c" style="left:253px;width:68px;text-align:left"><span class="s" style="transform:scaleX(0.9);transform-origin:0 0">C210500002</span></div>
<div class="c" style="left:326px;width:28px;text-align:left"><span class="s" style="transform:scaleX(0.9);transform-origin:0 0">01</span></div>
<div class="c" style="left:358px;width:70px;text-align:center"><span class="s" style="transform:scaleX(0.97);transform-origin:50% 0">10/05/2021</span></div>
<div class="c" style="left:431px;width:62px;text-align:center"><span class="s" style="transform:scaleX(0.97);transform-origin:50% 0">10/05/2021</span></div>
<div class="ab" style="left:512px;top:1px"><svg width="13" height="13" viewBox="0 0 13 13"><rect x="0.5" y="0.5" width="12" height="12" fill="#fff" stroke="#333" stroke-width="1.2"/></svg></div>
<div class="ab" style="left:561px;top:1px"><svg width="13" height="13" viewBox="0 0 13 13"><rect x="0.5" y="0.5" width="12" height="12" fill="#fff" stroke="#333" stroke-width="1.2"/><path d="M2.4 6.3 L5 8.9 L10.6 3.1" fill="none" stroke="#383838" stroke-width="1.3"/></svg></div>
<div class="c" style="left:594px;width:46px;text-align:right"><span class="s" style="transform:scaleX(0.9);transform-origin:100% 0">1</span></div>
</div>
<div class="r g" style="top:381px;background:#ffffff">
<div class="c" style="left:2px;width:68px;text-align:left"><span class="s" style="transform:scaleX(0.9);transform-origin:0 0">A21220003</span></div>
<div class="c" style="left:75px;width:84px;text-align:left"><span class="s" style="transform:scaleX(0.9);transform-origin:0 0">A21220003001</span></div>
<div class="c" style="left:164px;width:84px;text-align:left"><span class="s" style="transform:scaleX(0.9);transform-origin:0 0">C210500005/03</span></div>
<div class="c" style="left:253px;width:68px;text-align:left"><span class="s" style="transform:scaleX(0.9);transform-origin:0 0">C210500005</span></div>
<div class="c" style="left:326px;width:28px;text-align:left"><span class="s" style="transform:scaleX(0.9);transform-origin:0 0">03</span></div>
<div class="c" style="left:358px;width:70px;text-align:center"><span class="s" style="transform:scaleX(0.97);transform-origin:50% 0">11/05/2021</span></div>
<div class="c" style="left:431px;width:62px;text-align:center"><span class="s" style="transform:scaleX(0.97);transform-origin:50% 0">11/05/2021</span></div>
<div class="ab" style="left:512px;top:1px"><svg width="13" height="13" viewBox="0 0 13 13"><rect x="0.5" y="0.5" width="12" height="12" fill="#fff" stroke="#333" stroke-width="1.2"/></svg></div>
<div class="ab" style="left:561px;top:1px"><svg width="13" height="13" viewBox="0 0 13 13"><rect x="0.5" y="0.5" width="12" height="12" fill="#fff" stroke="#333" stroke-width="1.2"/><path d="M2.4 6.3 L5 8.9 L10.6 3.1" fill="none" stroke="#383838" stroke-width="1.3"/></svg></div>
<div class="c" style="left:594px;width:46px;text-align:right"><span class="s" style="transform:scaleX(0.9);transform-origin:100% 0">1</span></div>
</div>
<div class="r g" style="top:397px;background:#efefef">
<div class="c" style="left:2px;width:68px;text-align:left"><span class="s" style="transform:scaleX(0.9);transform-origin:0 0">A21220003</span></div>
<div class="c" style="left:75px;width:84px;text-align:left"><span class="s" style="transform:scaleX(0.9);transform-origin:0 0">A21220003002</span></div>
<div class="c" style="left:164px;width:84px;text-align:left"><span class="s" style="transform:scaleX(0.9);transform-origin:0 0">C210500005/02</span></div>
<div class="c" style="left:253px;width:68px;text-align:left"><span class="s" style="transform:scaleX(0.9);transform-origin:0 0">C210500005</span></div>
<div class="c" style="left:326px;width:28px;text-align:left"><span class="s" style="transform:scaleX(0.9);transform-origin:0 0">02</span></div>
<div class="c" style="left:358px;width:70px;text-align:center"><span class="s" style="transform:scaleX(0.97);transform-origin:50% 0">11/05/2021</span></div>
<div class="c" style="left:431px;width:62px;text-align:center"><span class="s" style="transform:scaleX(0.97);transform-origin:50% 0">11/05/2021</span></div>
<div class="ab" style="left:512px;top:1px"><svg width="13" height="13" viewBox="0 0 13 13"><rect x="0.5" y="0.5" width="12" height="12" fill="#fff" stroke="#333" stroke-width="1.2"/></svg></div>
<div class="ab" style="left:561px;top:1px"><svg width="13" height="13" viewBox="0 0 13 13"><rect x="0.5" y="0.5" width="12" height="12" fill="#fff" stroke="#333" stroke-width="1.2"/><path d="M2.4 6.3 L5 8.9 L10.6 3.1" fill="none" stroke="#383838" stroke-width="1.3"/></svg></div>
<div class="c" style="left:594px;width:46px;text-align:right"><span class="s" style="transform:scaleX(0.9);transform-origin:100% 0">1</span></div>
</div>
<div class="r g" style="top:413px;background:#ffffff">
<div class="c" style="left:2px;width:68px;text-align:left"><span class="s" style="transform:scaleX(0.9);transform-origin:0 0">A21300001</span></div>
<div class="c" style="left:75px;width:84px;text-align:left"><span class="s" style="transform:scaleX(0.9);transform-origin:0 0">A21300001001</span></div>
<div class="c" style="left:164px;width:84px;text-align:left"><span class="s" style="transform:scaleX(0.9);transform-origin:0 0">C180900010/02</span></div>
<div class="c" style="left:253px;width:68px;text-align:left"><span class="s" style="transform:scaleX(0.9);transform-origin:0 0">C180900010</span></div>
<div class="c" style="left:326px;width:28px;text-align:left"><span class="s" style="transform:scaleX(0.9);transform-origin:0 0">02</span></div>
<div class="c" style="left:358px;width:70px;text-align:center"><span class="s" style="transform:scaleX(0.97);transform-origin:50% 0"></span></div>
<div class="c" style="left:431px;width:62px;text-align:center"><span class="s" style="transform:scaleX(0.97);transform-origin:50% 0"></span></div>
<div class="ab" style="left:512px;top:1px"><svg width="13" height="13" viewBox="0 0 13 13"><rect x="0.5" y="0.5" width="12" height="12" fill="#fff" stroke="#333" stroke-width="1.2"/></svg></div>
<div class="ab" style="left:561px;top:1px"><svg width="13" height="13" viewBox="0 0 13 13"><rect x="0.5" y="0.5" width="12" height="12" fill="#fff" stroke="#333" stroke-width="1.2"/></svg></div>
<div class="c" style="left:594px;width:46px;text-align:right"><span class="s" style="transform:scaleX(0.9);transform-origin:100% 0">1</span></div>
</div>
<div class="r g" style="top:429px;background:#efefef">
<div class="c" style="left:2px;width:68px;text-align:left"><span class="s" style="transform:scaleX(0.9);transform-origin:0 0">A23330001</span></div>
<div class="c" style="left:75px;width:84px;text-align:left"><span class="s" style="transform:scaleX(0.9);transform-origin:0 0">A23330001001</span></div>
<div class="c" style="left:164px;width:84px;text-align:left"><span class="s" style="transform:scaleX(0.9);transform-origin:0 0">7-550-9010</span></div>
<div class="c" style="left:253px;width:68px;text-align:left"><span class="s" style="transform:scaleX(0.9);transform-origin:0 0"></span></div>
<div class="c" style="left:326px;width:28px;text-align:left"><span class="s" style="transform:scaleX(0.9);transform-origin:0 0"></span></div>
<div class="c" style="left:358px;width:70px;text-align:center"><span class="s" style="transform:scaleX(0.97);transform-origin:50% 0"></span></div>
<div class="c" style="left:431px;width:62px;text-align:center"><span class="s" style="transform:scaleX(0.97);transform-origin:50% 0"></span></div>
<div class="ab" style="left:512px;top:1px"><svg width="13" height="13" viewBox="0 0 13 13"><rect x="0.5" y="0.5" width="12" height="12" fill="#fff" stroke="#333" stroke-width="1.2"/></svg></div>
<div class="ab" style="left:561px;top:1px"><svg width="13" height="13" viewBox="0 0 13 13"><rect x="0.5" y="0.5" width="12" height="12" fill="#fff" stroke="#333" stroke-width="1.2"/></svg></div>
<div class="c" style="left:594px;width:46px;text-align:right"><span class="s" style="transform:scaleX(0.9);transform-origin:100% 0">1</span></div>
</div>
<div class="r g" style="top:445px;background:#ffffff">
<div class="c" style="left:2px;width:68px;text-align:left"><span class="s" style="transform:scaleX(0.9);transform-origin:0 0">A360001</span></div>
<div class="c" style="left:75px;width:84px;text-align:left"><span class="s" style="transform:scaleX(0.9);transform-origin:0 0">A360001</span></div>
<div class="c" style="left:164px;width:84px;text-align:left"><span class="s" style="transform:scaleX(0.9);transform-origin:0 0">C160800008/03</span></div>
<div class="c" style="left:253px;width:68px;text-align:left"><span class="s" style="transform:scaleX(0.9);transform-origin:0 0">C160800008</span></div>
<div class="c" style="left:326px;width:28px;text-align:left"><span class="s" style="transform:scaleX(0.9);transform-origin:0 0">03</span></div>
<div class="c" style="left:358px;width:70px;text-align:center"><span class="s" style="transform:scaleX(0.97);transform-origin:50% 0">24/03/2017</span></div>
<div class="c" style="left:431px;width:62px;text-align:center"><span class="s" style="transform:scaleX(0.97);transform-origin:50% 0">24/03/2017</span></div>
<div class="ab" style="left:512px;top:1px"><svg width="13" height="13" viewBox="0 0 13 13"><rect x="0.5" y="0.5" width="12" height="12" fill="#fff" stroke="#333" stroke-width="1.2"/></svg></div>
<div class="ab" style="left:561px;top:1px"><svg width="13" height="13" viewBox="0 0 13 13"><rect x="0.5" y="0.5" width="12" height="12" fill="#fff" stroke="#333" stroke-width="1.2"/><path d="M2.4 6.3 L5 8.9 L10.6 3.1" fill="none" stroke="#383838" stroke-width="1.3"/></svg></div>
<div class="c" style="left:594px;width:46px;text-align:right"><span class="s" style="transform:scaleX(0.9);transform-origin:100% 0">3</span></div>
</div>
<div class="r g" style="top:461px;background:#efefef">
<div class="c" style="left:2px;width:68px;text-align:left"><span class="s" style="transform:scaleX(0.9);transform-origin:0 0">P18410001</span></div>
<div class="c" style="left:75px;width:84px;text-align:left"><span class="s" style="transform:scaleX(0.9);transform-origin:0 0">P18410001001</span></div>
<div class="c" style="left:164px;width:84px;text-align:left"><span class="s" style="transform:scaleX(0.9);transform-origin:0 0">C180900019/01</span></div>
<div class="c" style="left:253px;width:68px;text-align:left"><span class="s" style="transform:scaleX(0.9);transform-origin:0 0">C180900019</span></div>
<div class="c" style="left:326px;width:28px;text-align:left"><span class="s" style="transform:scaleX(0.9);transform-origin:0 0">01</span></div>
<div class="c" style="left:358px;width:70px;text-align:center"><span class="s" style="transform:scaleX(0.97);transform-origin:50% 0">06/09/2018</span></div>
<div class="c" style="left:431px;width:62px;text-align:center"><span class="s" style="transform:scaleX(0.97);transform-origin:50% 0">06/09/2018</span></div>
<div class="ab" style="left:512px;top:1px"><svg width="13" height="13" viewBox="0 0 13 13"><rect x="0.5" y="0.5" width="12" height="12" fill="#fff" stroke="#333" stroke-width="1.2"/></svg></div>
<div class="ab" style="left:561px;top:1px"><svg width="13" height="13" viewBox="0 0 13 13"><rect x="0.5" y="0.5" width="12" height="12" fill="#fff" stroke="#333" stroke-width="1.2"/><path d="M2.4 6.3 L5 8.9 L10.6 3.1" fill="none" stroke="#383838" stroke-width="1.3"/></svg></div>
<div class="c" style="left:594px;width:46px;text-align:right"><span class="s" style="transform:scaleX(0.9);transform-origin:100% 0">1</span></div>
</div>
<div class="r g" style="top:477px;background:#ffffff">
<div class="c" style="left:2px;width:68px;text-align:left"><span class="s" style="transform:scaleX(0.9);transform-origin:0 0">P19290001</span></div>
<div class="c" style="left:75px;width:84px;text-align:left"><span class="s" style="transform:scaleX(0.9);transform-origin:0 0">P19290001001</span></div>
<div class="c" style="left:164px;width:84px;text-align:left"><span class="s" style="transform:scaleX(0.9);transform-origin:0 0">C180700001/22</span></div>
<div class="c" style="left:253px;width:68px;text-align:left"><span class="s" style="transform:scaleX(0.9);transform-origin:0 0">C180700001</span></div>
<div class="c" style="left:326px;width:28px;text-align:left"><span class="s" style="transform:scaleX(0.9);transform-origin:0 0">22</span></div>
<div class="c" style="left:358px;width:70px;text-align:center"><span class="s" style="transform:scaleX(0.97);transform-origin:50% 0">11/09/2018</span></div>
<div class="c" style="left:431px;width:62px;text-align:center"><span class="s" style="transform:scaleX(0.97);transform-origin:50% 0">21/09/2018</span></div>
<div class="ab" style="left:512px;top:1px"><svg width="13" height="13" viewBox="0 0 13 13"><rect x="0.5" y="0.5" width="12" height="12" fill="#fff" stroke="#333" stroke-width="1.2"/></svg></div>
<div class="ab" style="left:561px;top:1px"><svg width="13" height="13" viewBox="0 0 13 13"><rect x="0.5" y="0.5" width="12" height="12" fill="#fff" stroke="#333" stroke-width="1.2"/><path d="M2.4 6.3 L5 8.9 L10.6 3.1" fill="none" stroke="#383838" stroke-width="1.3"/></svg></div>
<div class="c" style="left:594px;width:46px;text-align:right"><span class="s" style="transform:scaleX(0.9);transform-origin:100% 0">1</span></div>
</div>
<div class="r g" style="top:493px;background:#efefef">
<div class="c" style="left:2px;width:68px;text-align:left"><span class="s" style="transform:scaleX(0.9);transform-origin:0 0">P19360001</span></div>
<div class="c" style="left:75px;width:84px;text-align:left"><span class="s" style="transform:scaleX(0.9);transform-origin:0 0">P19360001001</span></div>
<div class="c" style="left:164px;width:84px;text-align:left"><span class="s" style="transform:scaleX(0.9);transform-origin:0 0">C190800010/01</span></div>
<div class="c" style="left:253px;width:68px;text-align:left"><span class="s" style="transform:scaleX(0.9);transform-origin:0 0">C190800010</span></div>
<div class="c" style="left:326px;width:28px;text-align:left"><span class="s" style="transform:scaleX(0.9);transform-origin:0 0">01</span></div>
<div class="c" style="left:358px;width:70px;text-align:center"><span class="s" style="transform:scaleX(0.97);transform-origin:50% 0">19/02/2021</span></div>
<div class="c" style="left:431px;width:62px;text-align:center"><span class="s" style="transform:scaleX(0.97);transform-origin:50% 0">19/02/2021</span></div>
<div class="ab" style="left:512px;top:1px"><svg width="13" height="13" viewBox="0 0 13 13"><rect x="0.5" y="0.5" width="12" height="12" fill="#fff" stroke="#333" stroke-width="1.2"/></svg></div>
<div class="ab" style="left:561px;top:1px"><svg width="13" height="13" viewBox="0 0 13 13"><rect x="0.5" y="0.5" width="12" height="12" fill="#fff" stroke="#333" stroke-width="1.2"/><path d="M2.4 6.3 L5 8.9 L10.6 3.1" fill="none" stroke="#383838" stroke-width="1.3"/></svg></div>
<div class="c" style="left:594px;width:46px;text-align:right"><span class="s" style="transform:scaleX(0.9);transform-origin:100% 0">1</span></div>
</div>
<div class="r g" style="top:509px;background:#ffffff">
<div class="c" style="left:2px;width:68px;text-align:left"><span class="s" style="transform:scaleX(0.9);transform-origin:0 0">P19370001</span></div>
<div class="c" style="left:75px;width:84px;text-align:left"><span class="s" style="transform:scaleX(0.9);transform-origin:0 0">P19370001019</span></div>
<div class="c" style="left:164px;width:84px;text-align:left"><span class="s" style="transform:scaleX(0.9);transform-origin:0 0">C190800017/06</span></div>
<div class="c" style="left:253px;width:68px;text-align:left"><span class="s" style="transform:scaleX(0.9);transform-origin:0 0">C190800017</span></div>
<div class="c" style="left:326px;width:28px;text-align:left"><span class="s" style="transform:scaleX(0.9);transform-origin:0 0">06</span></div>
<div class="c" style="left:358px;width:70px;text-align:center"><span class="s" style="transform:scaleX(0.97);transform-origin:50% 0">12/08/2019</span></div>
<div class="c" style="left:431px;width:62px;text-align:center"><span class="s" style="transform:scaleX(0.97);transform-origin:50% 0">12/08/2019</span></div>
<div class="ab" style="left:512px;top:1px"><svg width="13" height="13" viewBox="0 0 13 13"><rect x="0.5" y="0.5" width="12" height="12" fill="#fff" stroke="#333" stroke-width="1.2"/></svg></div>
<div class="ab" style="left:561px;top:1px"><svg width="13" height="13" viewBox="0 0 13 13"><rect x="0.5" y="0.5" width="12" height="12" fill="#fff" stroke="#333" stroke-width="1.2"/><path d="M2.4 6.3 L5 8.9 L10.6 3.1" fill="none" stroke="#383838" stroke-width="1.3"/></svg></div>
<div class="c" style="left:594px;width:46px;text-align:right"><span class="s" style="transform:scaleX(0.9);transform-origin:100% 0">1</span></div>
</div>
<div class="r g" style="top:525px;background:#efefef">
<div class="c" style="left:2px;width:68px;text-align:left"><span class="s" style="transform:scaleX(0.9);transform-origin:0 0">P19370001</span></div>
<div class="c" style="left:75px;width:84px;text-align:left"><span class="s" style="transform:scaleX(0.9);transform-origin:0 0">P19370001020</span></div>
<div class="c" style="left:164px;width:84px;text-align:left"><span class="s" style="transform:scaleX(0.9);transform-origin:0 0">C190800017/05</span></div>
<div class="c" style="left:253px;width:68px;text-align:left"><span class="s" style="transform:scaleX(0.9);transform-origin:0 0">C190800017</span></div>
<div class="c" style="left:326px;width:28px;text-align:left"><span class="s" style="transform:scaleX(0.9);transform-origin:0 0">05</span></div>
<div class="c" style="left:358px;width:70px;text-align:center"><span class="s" style="transform:scaleX(0.97);transform-origin:50% 0">12/08/2019</span></div>
<div class="c" style="left:431px;width:62px;text-align:center"><span class="s" style="transform:scaleX(0.97);transform-origin:50% 0">12/08/2019</span></div>
<div class="ab" style="left:512px;top:1px"><svg width="13" height="13" viewBox="0 0 13 13"><rect x="0.5" y="0.5" width="12" height="12" fill="#fff" stroke="#333" stroke-width="1.2"/></svg></div>
<div class="ab" style="left:561px;top:1px"><svg width="13" height="13" viewBox="0 0 13 13"><rect x="0.5" y="0.5" width="12" height="12" fill="#fff" stroke="#333" stroke-width="1.2"/><path d="M2.4 6.3 L5 8.9 L10.6 3.1" fill="none" stroke="#383838" stroke-width="1.3"/></svg></div>
<div class="c" style="left:594px;width:46px;text-align:right"><span class="s" style="transform:scaleX(0.9);transform-origin:100% 0">1</span></div>
</div>
<div class="r g" style="top:541px;background:#ffffff">
<div class="c" style="left:2px;width:68px;text-align:left"><span class="s" style="transform:scaleX(0.9);transform-origin:0 0">P19370001</span></div>
<div class="c" style="left:75px;width:84px;text-align:left"><span class="s" style="transform:scaleX(0.9);transform-origin:0 0">P19370001021</span></div>
<div class="c" style="left:164px;width:84px;text-align:left"><span class="s" style="transform:scaleX(0.9);transform-origin:0 0">C190800017/03</span></div>
<div class="c" style="left:253px;width:68px;text-align:left"><span class="s" style="transform:scaleX(0.9);transform-origin:0 0">C190800017</span></div>
<div class="c" style="left:326px;width:28px;text-align:left"><span class="s" style="transform:scaleX(0.9);transform-origin:0 0">03</span></div>
<div class="c" style="left:358px;width:70px;text-align:center"><span class="s" style="transform:scaleX(0.97);transform-origin:50% 0">12/08/2019</span></div>
<div class="c" style="left:431px;width:62px;text-align:center"><span class="s" style="transform:scaleX(0.97);transform-origin:50% 0">12/08/2019</span></div>
<div class="ab" style="left:512px;top:1px"><svg width="13" height="13" viewBox="0 0 13 13"><rect x="0.5" y="0.5" width="12" height="12" fill="#fff" stroke="#333" stroke-width="1.2"/></svg></div>
<div class="ab" style="left:561px;top:1px"><svg width="13" height="13" viewBox="0 0 13 13"><rect x="0.5" y="0.5" width="12" height="12" fill="#fff" stroke="#333" stroke-width="1.2"/><path d="M2.4 6.3 L5 8.9 L10.6 3.1" fill="none" stroke="#383838" stroke-width="1.3"/></svg></div>
<div class="c" style="left:594px;width:46px;text-align:right"><span class="s" style="transform:scaleX(0.9);transform-origin:100% 0">1</span></div>
</div>
<div class="r g" style="top:557px;background:#efefef">
<div class="c" style="left:2px;width:68px;text-align:left"><span class="s" style="transform:scaleX(0.9);transform-origin:0 0">P19370001</span></div>
<div class="c" style="left:75px;width:84px;text-align:left"><span class="s" style="transform:scaleX(0.9);transform-origin:0 0">P19370001022</span></div>
<div class="c" style="left:164px;width:84px;text-align:left"><span class="s" style="transform:scaleX(0.9);transform-origin:0 0">C190800017/02</span></div>
<div class="c" style="left:253px;width:68px;text-align:left"><span class="s" style="transform:scaleX(0.9);transform-origin:0 0">C190800017</span></div>
<div class="c" style="left:326px;width:28px;text-align:left"><span class="s" style="transform:scaleX(0.9);transform-origin:0 0">02</span></div>
<div class="c" style="left:358px;width:70px;text-align:center"><span class="s" style="transform:scaleX(0.97);transform-origin:50% 0">12/08/2019</span></div>
<div class="c" style="left:431px;width:62px;text-align:center"><span class="s" style="transform:scaleX(0.97);transform-origin:50% 0">12/08/2019</span></div>
<div class="ab" style="left:512px;top:1px"><svg width="13" height="13" viewBox="0 0 13 13"><rect x="0.5" y="0.5" width="12" height="12" fill="#fff" stroke="#333" stroke-width="1.2"/></svg></div>
<div class="ab" style="left:561px;top:1px"><svg width="13" height="13" viewBox="0 0 13 13"><rect x="0.5" y="0.5" width="12" height="12" fill="#fff" stroke="#333" stroke-width="1.2"/><path d="M2.4 6.3 L5 8.9 L10.6 3.1" fill="none" stroke="#383838" stroke-width="1.3"/></svg></div>
<div class="c" style="left:594px;width:46px;text-align:right"><span class="s" style="transform:scaleX(0.9);transform-origin:100% 0">1</span></div>
</div>
<div class="r g" style="top:573px;background:#ffffff">
<div class="c" style="left:2px;width:68px;text-align:left"><span class="s" style="transform:scaleX(0.9);transform-origin:0 0">P19370001</span></div>
<div class="c" style="left:75px;width:84px;text-align:left"><span class="s" style="transform:scaleX(0.9);transform-origin:0 0">P19370001023</span></div>
<div class="c" style="left:164px;width:84px;text-align:left"><span class="s" style="transform:scaleX(0.9);transform-origin:0 0">C190800017/01</span></div>
<div class="c" style="left:253px;width:68px;text-align:left"><span class="s" style="transform:scaleX(0.9);transform-origin:0 0">C190800017</span></div>
<div class="c" style="left:326px;width:28px;text-align:left"><span class="s" style="transform:scaleX(0.9);transform-origin:0 0">01</span></div>
<div class="c" style="left:358px;width:70px;text-align:center"><span class="s" style="transform:scaleX(0.97);transform-origin:50% 0">12/08/2019</span></div>
<div class="c" style="left:431px;width:62px;text-align:center"><span class="s" style="transform:scaleX(0.97);transform-origin:50% 0">12/08/2019</span></div>
<div class="ab" style="left:512px;top:1px"><svg width="13" height="13" viewBox="0 0 13 13"><rect x="0.5" y="0.5" width="12" height="12" fill="#fff" stroke="#333" stroke-width="1.2"/></svg></div>
<div class="ab" style="left:561px;top:1px"><svg width="13" height="13" viewBox="0 0 13 13"><rect x="0.5" y="0.5" width="12" height="12" fill="#fff" stroke="#333" stroke-width="1.2"/><path d="M2.4 6.3 L5 8.9 L10.6 3.1" fill="none" stroke="#383838" stroke-width="1.3"/></svg></div>
<div class="c" style="left:594px;width:46px;text-align:right"><span class="s" style="transform:scaleX(0.9);transform-origin:100% 0">1</span></div>
</div>
<div class="r g" style="top:589px;background:#efefef">
<div class="c" style="left:2px;width:68px;text-align:left"><span class="s" style="transform:scaleX(0.9);transform-origin:0 0">P19370001</span></div>
<div class="c" style="left:75px;width:84px;text-align:left"><span class="s" style="transform:scaleX(0.9);transform-origin:0 0">P19370001024</span></div>
<div class="c" style="left:164px;width:84px;text-align:left"><span class="s" style="transform:scaleX(0.9);transform-origin:0 0">C190800016/06</span></div>
<div class="c" style="left:253px;width:68px;text-align:left"><span class="s" style="transform:scaleX(0.9);transform-origin:0 0">C190800016</span></div>
<div class="c" style="left:326px;width:28px;text-align:left"><span class="s" style="transform:scaleX(0.9);transform-origin:0 0">06</span></div>
<div class="c" style="left:358px;width:70px;text-align:center"><span class="s" style="transform:scaleX(0.97);transform-origin:50% 0">12/08/2019</span></div>
<div class="c" style="left:431px;width:62px;text-align:center"><span class="s" style="transform:scaleX(0.97);transform-origin:50% 0">12/08/2019</span></div>
<div class="ab" style="left:512px;top:1px"><svg width="13" height="13" viewBox="0 0 13 13"><rect x="0.5" y="0.5" width="12" height="12" fill="#fff" stroke="#333" stroke-width="1.2"/></svg></div>
<div class="ab" style="left:561px;top:1px"><svg width="13" height="13" viewBox="0 0 13 13"><rect x="0.5" y="0.5" width="12" height="12" fill="#fff" stroke="#333" stroke-width="1.2"/><path d="M2.4 6.3 L5 8.9 L10.6 3.1" fill="none" stroke="#383838" stroke-width="1.3"/></svg></div>
<div class="c" style="left:594px;width:46px;text-align:right"><span class="s" style="transform:scaleX(0.9);transform-origin:100% 0">1</span></div>
</div>
<div class="r g" style="top:605px;background:#ffffff">
<div class="c" style="left:2px;width:68px;text-align:left"><span class="s" style="transform:scaleX(0.9);transform-origin:0 0">P19370001</span></div>
<div class="c" style="left:75px;width:84px;text-align:left"><span class="s" style="transform:scaleX(0.9);transform-origin:0 0">P19370001025</span></div>
<div class="c" style="left:164px;width:84px;text-align:left"><span class="s" style="transform:scaleX(0.9);transform-origin:0 0">C190800016/05</span></div>
<div class="c" style="left:253px;width:68px;text-align:left"><span class="s" style="transform:scaleX(0.9);transform-origin:0 0">C190800016</span></div>
<div class="c" style="left:326px;width:28px;text-align:left"><span class="s" style="transform:scaleX(0.9);transform-origin:0 0">05</span></div>
<div class="c" style="left:358px;width:70px;text-align:center"><span class="s" style="transform:scaleX(0.97);transform-origin:50% 0">12/08/2019</span></div>
<div class="c" style="left:431px;width:62px;text-align:center"><span class="s" style="transform:scaleX(0.97);transform-origin:50% 0">12/08/2019</span></div>
<div class="ab" style="left:512px;top:1px"><svg width="13" height="13" viewBox="0 0 13 13"><rect x="0.5" y="0.5" width="12" height="12" fill="#fff" stroke="#333" stroke-width="1.2"/></svg></div>
<div class="ab" style="left:561px;top:1px"><svg width="13" height="13" viewBox="0 0 13 13"><rect x="0.5" y="0.5" width="12" height="12" fill="#fff" stroke="#333" stroke-width="1.2"/><path d="M2.4 6.3 L5 8.9 L10.6 3.1" fill="none" stroke="#383838" stroke-width="1.3"/></svg></div>
<div class="c" style="left:594px;width:46px;text-align:right"><span class="s" style="transform:scaleX(0.9);transform-origin:100% 0">1</span></div>
</div>
<div class="r g" style="top:621px;background:#efefef">
<div class="c" style="left:2px;width:68px;text-align:left"><span class="s" style="transform:scaleX(0.9);transform-origin:0 0">P19370001</span></div>
<div class="c" style="left:75px;width:84px;text-align:left"><span class="s" style="transform:scaleX(0.9);transform-origin:0 0">P19370001026</span></div>
<div class="c" style="left:164px;width:84px;text-align:left"><span class="s" style="transform:scaleX(0.9);transform-origin:0 0">C190800016/04</span></div>
<div class="c" style="left:253px;width:68px;text-align:left"><span class="s" style="transform:scaleX(0.9);transform-origin:0 0">C190800016</span></div>
<div class="c" style="left:326px;width:28px;text-align:left"><span class="s" style="transform:scaleX(0.9);transform-origin:0 0">04</span></div>
<div class="c" style="left:358px;width:70px;text-align:center"><span class="s" style="transform:scaleX(0.97);transform-origin:50% 0">03/02/2020</span></div>
<div class="c" style="left:431px;width:62px;text-align:center"><span class="s" style="transform:scaleX(0.97);transform-origin:50% 0">03/02/2020</span></div>
<div class="ab" style="left:512px;top:1px"><svg width="13" height="13" viewBox="0 0 13 13"><rect x="0.5" y="0.5" width="12" height="12" fill="#fff" stroke="#333" stroke-width="1.2"/></svg></div>
<div class="ab" style="left:561px;top:1px"><svg width="13" height="13" viewBox="0 0 13 13"><rect x="0.5" y="0.5" width="12" height="12" fill="#fff" stroke="#333" stroke-width="1.2"/><path d="M2.4 6.3 L5 8.9 L10.6 3.1" fill="none" stroke="#383838" stroke-width="1.3"/></svg></div>
<div class="c" style="left:594px;width:46px;text-align:right"><span class="s" style="transform:scaleX(0.9);transform-origin:100% 0">1</span></div>
</div>
<div class="r g" style="top:637px;background:#ffffff">
<div class="c" style="left:2px;width:68px;text-align:left"><span class="s" style="transform:scaleX(0.9);transform-origin:0 0">P19370001</span></div>
<div class="c" style="left:75px;width:84px;text-align:left"><span class="s" style="transform:scaleX(0.9);transform-origin:0 0">P19370001027</span></div>
<div class="c" style="left:164px;width:84px;text-align:left"><span class="s" style="transform:scaleX(0.9);transform-origin:0 0">C190800016/03</span></div>
<div class="c" style="left:253px;width:68px;text-align:left"><span class="s" style="transform:scaleX(0.9);transform-origin:0 0">C190800016</span></div>
<div class="c" style="left:326px;width:28px;text-align:left"><span class="s" style="transform:scaleX(0.9);transform-origin:0 0">03</span></div>
<div class="c" style="left:358px;width:70px;text-align:center"><span class="s" style="transform:scaleX(0.97);transform-origin:50% 0">10/05/2021</span></div>
<div class="c" style="left:431px;width:62px;text-align:center"><span class="s" style="transform:scaleX(0.97);transform-origin:50% 0">10/05/2021</span></div>
<div class="ab" style="left:512px;top:1px"><svg width="13" height="13" viewBox="0 0 13 13"><rect x="0.5" y="0.5" width="12" height="12" fill="#fff" stroke="#333" stroke-width="1.2"/></svg></div>
<div class="ab" style="left:561px;top:1px"><svg width="13" height="13" viewBox="0 0 13 13"><rect x="0.5" y="0.5" width="12" height="12" fill="#fff" stroke="#333" stroke-width="1.2"/><path d="M2.4 6.3 L5 8.9 L10.6 3.1" fill="none" stroke="#383838" stroke-width="1.3"/></svg></div>
<div class="c" style="left:594px;width:46px;text-align:right"><span class="s" style="transform:scaleX(0.9);transform-origin:100% 0">1</span></div>
</div>
<div class="r g" style="top:653px;background:#efefef">
<div class="c" style="left:2px;width:68px;text-align:left"><span class="s" style="transform:scaleX(0.9);transform-origin:0 0">P19370001</span></div>
<div class="c" style="left:75px;width:84px;text-align:left"><span class="s" style="transform:scaleX(0.9);transform-origin:0 0">P19370001028</span></div>
<div class="c" style="left:164px;width:84px;text-align:left"><span class="s" style="transform:scaleX(0.9);transform-origin:0 0">C190800016/02</span></div>
<div class="c" style="left:253px;width:68px;text-align:left"><span class="s" style="transform:scaleX(0.9);transform-origin:0 0">C190800016</span></div>
<div class="c" style="left:326px;width:28px;text-align:left"><span class="s" style="transform:scaleX(0.9);transform-origin:0 0">02</span></div>
<div class="c" style="left:358px;width:70px;text-align:center"><span class="s" style="transform:scaleX(0.97);transform-origin:50% 0">10/05/2021</span></div>
<div class="c" style="left:431px;width:62px;text-align:center"><span class="s" style="transform:scaleX(0.97);transform-origin:50% 0">10/05/2021</span></div>
<div class="ab" style="left:512px;top:1px"><svg width="13" height="13" viewBox="0 0 13 13"><rect x="0.5" y="0.5" width="12" height="12" fill="#fff" stroke="#333" stroke-width="1.2"/></svg></div>
<div class="ab" style="left:561px;top:1px"><svg width="13" height="13" viewBox="0 0 13 13"><rect x="0.5" y="0.5" width="12" height="12" fill="#fff" stroke="#333" stroke-width="1.2"/><path d="M2.4 6.3 L5 8.9 L10.6 3.1" fill="none" stroke="#383838" stroke-width="1.3"/></svg></div>
<div class="c" style="left:594px;width:46px;text-align:right"><span class="s" style="transform:scaleX(0.9);transform-origin:100% 0">1</span></div>
</div>
<div class="r g" style="top:669px;background:#ffffff">
<div class="c" style="left:2px;width:68px;text-align:left"><span class="s" style="transform:scaleX(0.9);transform-origin:0 0">P19370001</span></div>
<div class="c" style="left:75px;width:84px;text-align:left"><span class="s" style="transform:scaleX(0.9);transform-origin:0 0">P19370001029</span></div>
<div class="c" style="left:164px;width:84px;text-align:left"><span class="s" style="transform:scaleX(0.9);transform-origin:0 0">C190800016/01</span></div>
<div class="c" style="left:253px;width:68px;text-align:left"><span class="s" style="transform:scaleX(0.9);transform-origin:0 0">C190800016</span></div>
<div class="c" style="left:326px;width:28px;text-align:left"><span class="s" style="transform:scaleX(0.9);transform-origin:0 0">01</span></div>
<div class="c" style="left:358px;width:70px;text-align:center"><span class="s" style="transform:scaleX(0.97);transform-origin:50% 0">10/05/2021</span></div>
<div class="c" style="left:431px;width:62px;text-align:center"><span class="s" style="transform:scaleX(0.97);transform-origin:50% 0">10/05/2021</span></div>
<div class="ab" style="left:512px;top:1px"><svg width="13" height="13" viewBox="0 0 13 13"><rect x="0.5" y="0.5" width="12" height="12" fill="#fff" stroke="#333" stroke-width="1.2"/></svg></div>
<div class="ab" style="left:561px;top:1px"><svg width="13" height="13" viewBox="0 0 13 13"><rect x="0.5" y="0.5" width="12" height="12" fill="#fff" stroke="#333" stroke-width="1.2"/><path d="M2.4 6.3 L5 8.9 L10.6 3.1" fill="none" stroke="#383838" stroke-width="1.3"/></svg></div>
<div class="c" style="left:594px;width:46px;text-align:right"><span class="s" style="transform:scaleX(0.9);transform-origin:100% 0">1</span></div>
</div>
<div class="r g" style="top:685px;background:#efefef">
<div class="c" style="left:2px;width:68px;text-align:left"><span class="s" style="transform:scaleX(0.9);transform-origin:0 0">P19370001</span></div>
<div class="c" style="left:75px;width:84px;text-align:left"><span class="s" style="transform:scaleX(0.9);transform-origin:0 0">P19370001030</span></div>
<div class="c" style="left:164px;width:84px;text-align:left"><span class="s" style="transform:scaleX(0.9);transform-origin:0 0">C190800015/06</span></div>
<div class="c" style="left:253px;width:68px;text-align:left"><span class="s" style="transform:scaleX(0.9);transform-origin:0 0">C190800015</span></div>
<div class="c" style="left:326px;width:28px;text-align:left"><span class="s" style="transform:scaleX(0.9);transform-origin:0 0">06</span></div>
<div class="c" style="left:358px;width:70px;text-align:center"><span class="s" style="transform:scaleX(0.97);transform-origin:50% 0">10/05/2021</span></div>
<div class="c" style="left:431px;width:62px;text-align:center"><span class="s" style="transform:scaleX(0.97);transform-origin:50% 0">10/05/2021</span></div>
<div class="ab" style="left:512px;top:1px"><svg width="13" height="13" viewBox="0 0 13 13"><rect x="0.5" y="0.5" width="12" height="12" fill="#fff" stroke="#333" stroke-width="1.2"/></svg></div>
<div class="ab" style="left:561px;top:1px"><svg width="13" height="13" viewBox="0 0 13 13"><rect x="0.5" y="0.5" width="12" height="12" fill="#fff" stroke="#333" stroke-width="1.2"/><path d="M2.4 6.3 L5 8.9 L10.6 3.1" fill="none" stroke="#383838" stroke-width="1.3"/></svg></div>
<div class="c" style="left:594px;width:46px;text-align:right"><span class="s" style="transform:scaleX(0.9);transform-origin:100% 0">1</span></div>
</div>
<div class="r g" style="top:701px;background:#ffffff">
<div class="c" style="left:2px;width:68px;text-align:left"><span class="s" style="transform:scaleX(0.9);transform-origin:0 0">P19370001</span></div>
<div class="c" style="left:75px;width:84px;text-align:left"><span class="s" style="transform:scaleX(0.9);transform-origin:0 0">P19370001031</span></div>
<div class="c" style="left:164px;width:84px;text-align:left"><span class="s" style="transform:scaleX(0.9);transform-origin:0 0">C190800015/05</span></div>
<div class="c" style="left:253px;width:68px;text-align:left"><span class="s" style="transform:scaleX(0.9);transform-origin:0 0">C190800015</span></div>
<div class="c" style="left:326px;width:28px;text-align:left"><span class="s" style="transform:scaleX(0.9);transform-origin:0 0">05</span></div>
<div class="c" style="left:358px;width:70px;text-align:center"><span class="s" style="transform:scaleX(0.97);transform-origin:50% 0">10/05/2021</span></div>
<div class="c" style="left:431px;width:62px;text-align:center"><span class="s" style="transform:scaleX(0.97);transform-origin:50% 0">10/05/2021</span></div>
<div class="ab" style="left:512px;top:1px"><svg width="13" height="13" viewBox="0 0 13 13"><rect x="0.5" y="0.5" width="12" height="12" fill="#fff" stroke="#333" stroke-width="1.2"/></svg></div>
<div class="ab" style="left:561px;top:1px"><svg width="13" height="13" viewBox="0 0 13 13"><rect x="0.5" y="0.5" width="12" height="12" fill="#fff" stroke="#333" stroke-width="1.2"/><path d="M2.4 6.3 L5 8.9 L10.6 3.1" fill="none" stroke="#383838" stroke-width="1.3"/></svg></div>
<div class="c" style="left:594px;width:46px;text-align:right"><span class="s" style="transform:scaleX(0.9);transform-origin:100% 0">1</span></div>
</div>
<div class="r g" style="top:717px;background:#efefef">
<div class="c" style="left:2px;width:68px;text-align:left"><span class="s" style="transform:scaleX(0.9);transform-origin:0 0">P19370001</span></div>
<div class="c" style="left:75px;width:84px;text-align:left"><span class="s" style="transform:scaleX(0.9);transform-origin:0 0">P19370001032</span></div>
<div class="c" style="left:164px;width:84px;text-align:left"><span class="s" style="transform:scaleX(0.9);transform-origin:0 0">C190800015/04</span></div>
<div class="c" style="left:253px;width:68px;text-align:left"><span class="s" style="transform:scaleX(0.9);transform-origin:0 0">C190800015</span></div>
<div class="c" style="left:326px;width:28px;text-align:left"><span class="s" style="transform:scaleX(0.9);transform-origin:0 0">04</span></div>
<div class="c" style="left:358px;width:70px;text-align:center"><span class="s" style="transform:scaleX(0.97);transform-origin:50% 0">10/05/2021</span></div>
<div class="c" style="left:431px;width:62px;text-align:center"><span class="s" style="transform:scaleX(0.97);transform-origin:50% 0">10/05/2021</span></div>
<div class="ab" style="left:512px;top:1px"><svg width="13" height="13" viewBox="0 0 13 13"><rect x="0.5" y="0.5" width="12" height="12" fill="#fff" stroke="#333" stroke-width="1.2"/></svg></div>
<div class="ab" style="left:561px;top:1px"><svg width="13" height="13" viewBox="0 0 13 13"><rect x="0.5" y="0.5" width="12" height="12" fill="#fff" stroke="#333" stroke-width="1.2"/><path d="M2.4 6.3 L5 8.9 L10.6 3.1" fill="none" stroke="#383838" stroke-width="1.3"/></svg></div>
<div class="c" style="left:594px;width:46px;text-align:right"><span class="s" style="transform:scaleX(0.9);transform-origin:100% 0">1</span></div>
</div>
<div class="r g" style="top:733px;background:#ffffff">
<div class="c" style="left:2px;width:68px;text-align:left"><span class="s" style="transform:scaleX(0.9);transform-origin:0 0">P19370001</span></div>
<div class="c" style="left:75px;width:84px;text-align:left"><span class="s" style="transform:scaleX(0.9);transform-origin:0 0">P19370001033</span></div>
<div class="c" style="left:164px;width:84px;text-align:left"><span class="s" style="transform:scaleX(0.9);transform-origin:0 0">C190800015/03</span></div>
<div class="c" style="left:253px;width:68px;text-align:left"><span class="s" style="transform:scaleX(0.9);transform-origin:0 0">C190800015</span></div>
<div class="c" style="left:326px;width:28px;text-align:left"><span class="s" style="transform:scaleX(0.9);transform-origin:0 0">03</span></div>
<div class="c" style="left:358px;width:70px;text-align:center"><span class="s" style="transform:scaleX(0.97);transform-origin:50% 0">10/05/2021</span></div>
<div class="c" style="left:431px;width:62px;text-align:center"><span class="s" style="transform:scaleX(0.97);transform-origin:50% 0">10/05/2021</span></div>
<div class="ab" style="left:512px;top:1px"><svg width="13" height="13" viewBox="0 0 13 13"><rect x="0.5" y="0.5" width="12" height="12" fill="#fff" stroke="#333" stroke-width="1.2"/></svg></div>
<div class="ab" style="left:561px;top:1px"><svg width="13" height="13" viewBox="0 0 13 13"><rect x="0.5" y="0.5" width="12" height="12" fill="#fff" stroke="#333" stroke-width="1.2"/><path d="M2.4 6.3 L5 8.9 L10.6 3.1" fill="none" stroke="#383838" stroke-width="1.3"/></svg></div>
<div class="c" style="left:594px;width:46px;text-align:right"><span class="s" style="transform:scaleX(0.9);transform-origin:100% 0">1</span></div>
</div>
<div class="r g" style="top:749px;background:#efefef">
<div class="c" style="left:2px;width:68px;text-align:left"><span class="s" style="transform:scaleX(0.9);transform-origin:0 0">P19370001</span></div>
<div class="c" style="left:75px;width:84px;text-align:left"><span class="s" style="transform:scaleX(0.9);transform-origin:0 0">P19370001034</span></div>
<div class="c" style="left:164px;width:84px;text-align:left"><span class="s" style="transform:scaleX(0.9);transform-origin:0 0">C190800015/02</span></div>
<div class="c" style="left:253px;width:68px;text-align:left"><span class="s" style="transform:scaleX(0.9);transform-origin:0 0">C190800015</span></div>
<div class="c" style="left:326px;width:28px;text-align:left"><span class="s" style="transform:scaleX(0.9);transform-origin:0 0">02</span></div>
<div class="c" style="left:358px;width:70px;text-align:center"><span class="s" style="transform:scaleX(0.97);transform-origin:50% 0">25/09/2020</span></div>
<div class="c" style="left:431px;width:62px;text-align:center"><span class="s" style="transform:scaleX(0.97);transform-origin:50% 0">25/09/2020</span></div>
<div class="ab" style="left:512px;top:1px"><svg width="13" height="13" viewBox="0 0 13 13"><rect x="0.5" y="0.5" width="12" height="12" fill="#fff" stroke="#333" stroke-width="1.2"/></svg></div>
<div class="ab" style="left:561px;top:1px"><svg width="13" height="13" viewBox="0 0 13 13"><rect x="0.5" y="0.5" width="12" height="12" fill="#fff" stroke="#333" stroke-width="1.2"/><path d="M2.4 6.3 L5 8.9 L10.6 3.1" fill="none" stroke="#383838" stroke-width="1.3"/></svg></div>
<div class="c" style="left:594px;width:46px;text-align:right"><span class="s" style="transform:scaleX(0.9);transform-origin:100% 0">1</span></div>
</div>
<div class="r g" style="top:765px;background:#ffffff">
<div class="c" style="left:2px;width:68px;text-align:left"><span class="s" style="transform:scaleX(0.9);transform-origin:0 0">P19370001</span></div>
<div class="c" style="left:75px;width:84px;text-align:left"><span class="s" style="transform:scaleX(0.9);transform-origin:0 0">P19370001035</span></div>
<div class="c" style="left:164px;width:84px;text-align:left"><span class="s" style="transform:scaleX(0.9);transform-origin:0 0">C190800015/01</span></div>
<div class="c" style="left:253px;width:68px;text-align:left"><span class="s" style="transform:scaleX(0.9);transform-origin:0 0">C190800015</span></div>
<div class="c" style="left:326px;width:28px;text-align:left"><span class="s" style="transform:scaleX(0.9);transform-origin:0 0">01</span></div>
<div class="c" style="left:358px;width:70px;text-align:center"><span class="s" style="transform:scaleX(0.97);transform-origin:50% 0">10/05/2021</span></div>
<div class="c" style="left:431px;width:62px;text-align:center"><span class="s" style="transform:scaleX(0.97);transform-origin:50% 0">10/05/2021</span></div>
<div class="ab" style="left:512px;top:1px"><svg width="13" height="13" viewBox="0 0 13 13"><rect x="0.5" y="0.5" width="12" height="12" fill="#fff" stroke="#333" stroke-width="1.2"/></svg></div>
<div class="ab" style="left:561px;top:1px"><svg width="13" height="13" viewBox="0 0 13 13"><rect x="0.5" y="0.5" width="12" height="12" fill="#fff" stroke="#333" stroke-width="1.2"/><path d="M2.4 6.3 L5 8.9 L10.6 3.1" fill="none" stroke="#383838" stroke-width="1.3"/></svg></div>
<div class="c" style="left:594px;width:46px;text-align:right"><span class="s" style="transform:scaleX(0.9);transform-origin:100% 0">1</span></div>
</div>
<div class="r g" style="top:781px;background:#efefef">
<div class="c" style="left:2px;width:68px;text-align:left"><span class="s" style="transform:scaleX(0.9);transform-origin:0 0">P20400001</span></div>
<div class="c" style="left:75px;width:84px;text-align:left"><span class="s" style="transform:scaleX(0.9);transform-origin:0 0">P20400001001</span></div>
<div class="c" style="left:164px;width:84px;text-align:left"><span class="s" style="transform:scaleX(0.9);transform-origin:0 0">C200900013/01</span></div>
<div class="c" style="left:253px;width:68px;text-align:left"><span class="s" style="transform:scaleX(0.9);transform-origin:0 0">C200900013</span></div>
<div class="c" style="left:326px;width:28px;text-align:left"><span class="s" style="transform:scaleX(0.9);transform-origin:0 0">01</span></div>
<div class="c" style="left:358px;width:70px;text-align:center"><span class="s" style="transform:scaleX(0.97);transform-origin:50% 0">19/07/2021</span></div>
<div class="c" style="left:431px;width:62px;text-align:center"><span class="s" style="transform:scaleX(0.97);transform-origin:50% 0">19/07/2021</span></div>
<div class="ab" style="left:512px;top:1px"><svg width="13" height="13" viewBox="0 0 13 13"><rect x="0.5" y="0.5" width="12" height="12" fill="#fff" stroke="#333" stroke-width="1.2"/></svg></div>
<div class="ab" style="left:561px;top:1px"><svg width="13" height="13" viewBox="0 0 13 13"><rect x="0.5" y="0.5" width="12" height="12" fill="#fff" stroke="#333" stroke-width="1.2"/><path d="M2.4 6.3 L5 8.9 L10.6 3.1" fill="none" stroke="#383838" stroke-width="1.3"/></svg></div>
<div class="c" style="left:594px;width:46px;text-align:right"><span class="s" style="transform:scaleX(0.9);transform-origin:100% 0">1</span></div>
</div>
<div class="r g" style="top:797px;background:#ffffff">
<div class="c" style="left:2px;width:68px;text-align:left"><span class="s" style="transform:scaleX(0.9);transform-origin:0 0">P20410001</span></div>
<div class="c" style="left:75px;width:84px;text-align:left"><span class="s" style="transform:scaleX(0.9);transform-origin:0 0">P20410001001</span></div>
<div class="c" style="left:164px;width:84px;text-align:left"><span class="s" style="transform:scaleX(0.9);transform-origin:0 0">C201000001/01</span></div>
<div class="c" style="left:253px;width:68px;text-align:left"><span class="s" style="transform:scaleX(0.9);transform-origin:0 0">C201000001</span></div>
<div class="c" style="left:326px;width:28px;text-align:left"><span class="s" style="transform:scaleX(0.9);transform-origin:0 0">01</span></div>
<div class="c" style="left:358px;width:70px;text-align:center"><span class="s" style="transform:scaleX(0.97);transform-origin:50% 0">06/10/2020</span></div>
<div class="c" style="left:431px;width:62px;text-align:center"><span class="s" style="transform:scaleX(0.97);transform-origin:50% 0">06/10/2020</span></div>
<div class="ab" style="left:512px;top:1px"><svg width="13" height="13" viewBox="0 0 13 13"><rect x="0.5" y="0.5" width="12" height="12" fill="#fff" stroke="#333" stroke-width="1.2"/></svg></div>
<div class="ab" style="left:561px;top:1px"><svg width="13" height="13" viewBox="0 0 13 13"><rect x="0.5" y="0.5" width="12" height="12" fill="#fff" stroke="#333" stroke-width="1.2"/><path d="M2.4 6.3 L5 8.9 L10.6 3.1" fill="none" stroke="#383838" stroke-width="1.3"/></svg></div>
<div class="c" style="left:594px;width:46px;text-align:right"><span class="s" style="transform:scaleX(0.9);transform-origin:100% 0">1</span></div>
</div>
<div class="r g" style="top:813px;background:#efefef">
<div class="c" style="left:2px;width:68px;text-align:left"><span class="s" style="transform:scaleX(0.9);transform-origin:0 0"></span></div>
<div class="c" style="left:75px;width:84px;text-align:left"><span class="s" style="transform:scaleX(0.9);transform-origin:0 0"></span></div>
<div class="c" style="left:164px;width:84px;text-align:left"><span class="s" style="transform:scaleX(0.9);transform-origin:0 0"></span></div>
<div class="c" style="left:253px;width:68px;text-align:left"><span class="s" style="transform:scaleX(0.9);transform-origin:0 0"></span></div>
<div class="c" style="left:326px;width:28px;text-align:left"><span class="s" style="transform:scaleX(0.9);transform-origin:0 0"></span></div>
<div class="c" style="left:358px;width:70px;text-align:center"><span class="s" style="transform:scaleX(0.97);transform-origin:50% 0"></span></div>
<div class="c" style="left:431px;width:62px;text-align:center"><span class="s" style="transform:scaleX(0.97);transform-origin:50% 0"></span></div>
<div class="ab" style="left:512px;top:1px"><svg width="13" height="13" viewBox="0 0 13 13"><rect x="0.5" y="0.5" width="12" height="12" fill="#fff" stroke="#333" stroke-width="1.2"/></svg></div>
<div class="ab" style="left:561px;top:1px"><svg width="13" height="13" viewBox="0 0 13 13"><rect x="0.5" y="0.5" width="12" height="12" fill="#fff" stroke="#333" stroke-width="1.2"/><path d="M2.4 6.3 L5 8.9 L10.6 3.1" fill="none" stroke="#383838" stroke-width="1.3"/></svg></div>
<div class="c" style="left:594px;width:46px;text-align:right"><span class="s" style="transform:scaleX(0.9);transform-origin:100% 0"></span></div>
</div>
<div class="ab" style="left:141px;top:78px;width:1px;height:738px;background-image:linear-gradient(#c2c2c2 50%,transparent 50%);background-size:1px 2px"></div>
<div class="ab" style="left:230px;top:78px;width:1px;height:738px;background-image:linear-gradient(#c2c2c2 50%,transparent 50%);background-size:1px 2px"></div>
<div class="ab" style="left:319px;top:78px;width:1px;height:738px;background-image:linear-gradient(#c2c2c2 50%,transparent 50%);background-size:1px 2px"></div>
<div class="ab" style="left:392px;top:78px;width:1px;height:738px;background-image:linear-gradient(#c2c2c2 50%,transparent 50%);background-size:1px 2px"></div>
<div class="ab" style="left:425px;top:78px;width:1px;height:738px;background-image:linear-gradient(#c2c2c2 50%,transparent 50%);background-size:1px 2px"></div>
<div class="ab" style="left:498px;top:78px;width:1px;height:738px;background-image:linear-gradient(#c2c2c2 50%,transparent 50%);background-size:1px 2px"></div>
<div class="ab" style="left:563px;top:78px;width:1px;height:738px;background-image:linear-gradient(#c2c2c2 50%,transparent 50%);background-size:1px 2px"></div>
<div class="ab" style="left:612px;top:78px;width:1px;height:738px;background-image:linear-gradient(#c2c2c2 50%,transparent 50%);background-size:1px 2px"></div>
<div class="ab" style="left:661px;top:78px;width:1px;height:738px;background-image:linear-gradient(#c2c2c2 50%,transparent 50%);background-size:1px 2px"></div>
<div class="ab" style="left:710px;top:78px;width:1px;height:738px;background-image:linear-gradient(#c2c2c2 50%,transparent 50%);background-size:1px 2px"></div>
<div class="rh" style="top:77px;height:17px;background:#ffd58e;border-top:1px solid #f5a33c;border-right:1px solid #f5a33c;border-bottom:1px solid #9fb7d6"></div>
<div class="rh" style="top:94px;border-right:1px solid #9fb7d6"></div>
<div class="rh" style="top:110px;border-right:1px solid #9fb7d6"></div>
<div class="rh" style="top:126px;border-right:1px solid #9fb7d6"></div>
<div class="rh" style="top:142px;border-right:1px solid #9fb7d6"></div>
<div class="rh" style="top:158px;border-right:1px solid #9fb7d6"></div>
<div class="rh" style="top:174px;border-right:1px solid #9fb7d6"></div>
<div class="rh" style="top:190px;border-right:1px solid #9fb7d6"></div>
<div class="rh" style="top:206px;border-right:1px solid #9fb7d6"></div>
<div class="rh" style="top:222px;border-right:1px solid #9fb7d6"></div>
<div class="rh" style="top:238px;border-right:1px solid #9fb7d6"></div>
<div class="rh" style="top:254px;border-right:1px solid #9fb7d6"></div>
<div class="rh" style="top:270px;border-right:1px solid #9fb7d6"></div>
<div class="rh" style="top:286px;border-right:1px solid #9fb7d6"></div>
<div class="rh" style="top:302px;border-right:1px solid #9fb7d6"></div>
<div class="rh" style="top:318px;border-right:1px solid #9fb7d6"></div>
<div class="rh" style="top:334px;border-right:1px solid #9fb7d6"></div>
<div class="rh" style="top:350px;border-right:1px solid #9fb7d6"></div>
<div class="rh" style="top:366px;border-right:1px solid #9fb7d6"></div>
<div class="rh" style="top:382px;border-right:1px solid #9fb7d6"></div>
<div class="rh" style="top:398px;border-right:1px solid #9fb7d6"></div>
<div class="rh" style="top:414px;border-right:1px solid #9fb7d6"></div>
<div class="rh" style="top:430px;border-right:1px solid #9fb7d6"></div>
<div class="rh" style="top:446px;border-right:1px solid #9fb7d6"></div>
<div class="rh" style="top:462px;border-right:1px solid #9fb7d6"></div>
<div class="rh" style="top:478px;border-right:1px solid #9fb7d6"></div>
<div class="rh" style="top:494px;border-right:1px solid #9fb7d6"></div>
<div class="rh" style="top:510px;border-right:1px solid #9fb7d6"></div>
<div class="rh" style="top:526px;border-right:1px solid #9fb7d6"></div>
<div class="rh" style="top:542px;border-right:1px solid #9fb7d6"></div>
<div class="rh" style="top:558px;border-right:1px solid #9fb7d6"></div>
<div class="rh" style="top:574px;border-right:1px solid #9fb7d6"></div>
<div class="rh" style="top:590px;border-right:1px solid #9fb7d6"></div>
<div class="rh" style="top:606px;border-right:1px solid #9fb7d6"></div>
<div class="rh" style="top:622px;border-right:1px solid #9fb7d6"></div>
<div class="rh" style="top:638px;border-right:1px solid #9fb7d6"></div>
<div class="rh" style="top:654px;border-right:1px solid #9fb7d6"></div>
<div class="rh" style="top:670px;border-right:1px solid #9fb7d6"></div>
<div class="rh" style="top:686px;border-right:1px solid #9fb7d6"></div>
<div class="rh" style="top:702px;border-right:1px solid #9fb7d6"></div>
<div class="rh" style="top:718px;border-right:1px solid #9fb7d6"></div>
<div class="rh" style="top:734px;border-right:1px solid #9fb7d6"></div>
<div class="rh" style="top:750px;border-right:1px solid #9fb7d6"></div>
<div class="rh" style="top:766px;border-right:1px solid #9fb7d6"></div>
<div class="rh" style="top:782px;border-right:1px solid #9fb7d6"></div>
<div class="rh" style="top:798px;border-right:1px solid #9fb7d6"></div>
<div class="rh" style="top:814px;border-right:1px solid #9fb7d6"></div>
<div class="ab" style="left:36px;top:47px;width:33px;height:31px;background:#a9c3e9;border-right:1px solid #a3bad6;border-bottom:1px solid #f5a33c"><svg class="ab" style="left:19px;top:18px" width="9" height="9"><path d="M9 0 L9 9 L0 9 Z" fill="#e6eef9"/></svg></div>
<div class="hd" style="left:69px;width:73px;"><span class="s" style="transform:scaleX(0.88);transform-origin:50% 50%">Numéro Série</span></div>
<div class="hd" style="left:142px;width:89px;"><span class="s" style="transform:scaleX(0.88);transform-origin:50% 50%">Numéro OF</span></div>
<div class="hd" style="left:231px;width:89px;"><span class="s" style="transform:scaleX(0.88);transform-origin:50% 50%">Réf. Article</span></div>
<div class="hd" style="left:320px;width:73px;"><span class="s" style="transform:scaleX(0.88);transform-origin:50% 50%">Commande</span></div>
<div class="hd" style="left:393px;width:33px;"><span class="s" style="transform:scaleX(0.88);transform-origin:50% 50%">Ligne</span></div>
<div class="hd" style="left:425px;width:74px;background:linear-gradient(#fbe0a8,#f3b95c);border-left:1px solid #f5a33c;border-bottom:1px solid #f5a33c;"><span class="s" style="transform:scaleX(0.88);transform-origin:50% 50%">Date Réel<br>Début</span></div>
<div class="hd" style="left:499px;width:65px;"><span class="s" style="transform:scaleX(0.88);transform-origin:50% 50%">Date Réel<br>Fin</span></div>
<div class="hd" style="left:564px;width:49px;"><span class="s" style="transform:scaleX(0.88);transform-origin:50% 50%">Fab.<br>Partielle</span></div>
<div class="hd" style="left:613px;width:49px;"><span class="s" style="transform:scaleX(0.88);transform-origin:50% 50%">Fabriqué</span></div>
<div class="hd" style="left:662px;width:49px;"><span class="s" style="transform:scaleX(0.88);transform-origin:50% 50%">Qté<br>Lancée</span></div>
<div class="hd" style="left:711px;width:3px;border-right:none"></div>
<div class="ab" style="left:424px;top:78px;width:76px;height:17px;border:2px solid #000;box-shadow:inset 0 0 0 1px #fff"></div>
<div class="ab" style="left:714px;top:47px;width:16px;height:769px;background:#7397c1"></div>
<div class="ab" style="left:714px;top:47px;width:16px;height:16px;background:linear-gradient(90deg,#dce8f7 50%,#c4d7f1 50%);border:1px solid #4d6894"><svg class="ab" style="left:2px;top:4px" width="10" height="6"><path d="M5 0 L10 6 L0 6Z" fill="#3d4a6b"/></svg></div>
<div class="ab" style="left:714px;top:138px;width:16px;height:38px;background:linear-gradient(90deg,#dce8f7 50%,#c4d7f1 50%);border:1px solid #4d6894"></div>
<div class="ab" style="left:714px;top:800px;width:16px;height:16px;background:linear-gradient(90deg,#dce8f7 50%,#c4d7f1 50%);border:1px solid #4d6894"><svg class="ab" style="left:2px;top:5px" width="10" height="6"><path d="M0 0 L10 0 L5 6Z" fill="#3d4a6b"/></svg></div>
<div class="ab" style="left:36px;top:816px;width:694px;height:16px;background:#7397c1;border-top:1px solid #4d6894"></div>
<div class="ab" style="left:36px;top:816px;width:561px;height:16px;background:linear-gradient(#d9e6f6 50%,#c2d5ef 50%);border:1px solid #4d6894"></div>
<div class="ab" style="left:36px;top:816px;width:16px;height:16px;background:linear-gradient(#d9e6f6 50%,#c2d5ef 50%);border:1px solid #4d6894"><svg class="ab" style="left:4px;top:2px" width="6" height="10"><path d="M6 0 L6 10 L0 5Z" fill="#3d4a6b"/></svg></div>
<div class="ab" style="left:698px;top:816px;width:16px;height:16px;background:linear-gradient(#d9e6f6 50%,#c2d5ef 50%);border:1px solid #4d6894"><svg class="ab" style="left:4px;top:2px" width="6" height="10"><path d="M0 0 L6 5 L0 10Z" fill="#3d4a6b"/></svg></div>
<div class="ab" style="left:714px;top:816px;width:16px;height:16px;background:linear-gradient(#8fb0d6,#6f93bf)"></div>
<div class="ab" style="left:35px;top:833px;width:697px;height:25px;background:#f0f0f0"></div>
<div class="ab" style="left:41px;top:839px;width:66px;height:22px;background:#cdcdcd;border:1px solid #bdbdbd;font-size:11px;color:#6d6d6d"><svg class="ab" style="left:8px;top:4px" width="13" height="13"><path d="M1.5 1.5L11.5 11.5M11.5 1.5L1.5 11.5" stroke="#b8b8b8" stroke-width="2.6"/></svg><span class="ab s" style="left:26px;top:2px;font-size:12px;transform:scaleX(.88);transform-origin:0 0">Fermer</span></div>
<div class="ab" style="left:731px;top:45px;width:6px;height:813px;background:#e4e4e4"></div>
<div class="ab" style="left:732px;top:45px;width:4px;height:813px;background:#9d9d9d"></div>
<div class="ab" style="left:737px;top:45px;width:487px;height:813px;background:#f0f0f0"></div>
<div class="ab" style="left:737px;top:45px;width:487px;height:24px;background:linear-gradient(#ececec,#f9f9f9)"></div>
<svg class="ab" style="left:737px;top:45px" width="487" height="26" viewBox="0 0 487 26"><defs><linearGradient id="tg" x1="0" y1="0" x2="0" y2="1"><stop offset="0" stop-color="#fbfbfb"/><stop offset="1" stop-color="#f0f0f0"/></linearGradient></defs><path d="M0.5 26 L0.5 23.5 L6 23.5 L16.5 6.5 Q17.8 4.5 20 4.5 L84 4.5 Q87.5 4.5 89.5 8 L100 26 Z" fill="url(#tg)"/><path d="M0.5 26 L0.5 23.5 L6 23.5 L16.5 6.5 Q17.8 4.5 20 4.5 L84 4.5 Q87.5 4.5 89.5 8 L100 26" fill="none" stroke="#a0a0a0" stroke-width="1"/><path d="M163 26 L170 7 Q171 4.5 174 4.5 L249 4.5 Q252 4.5 254 8 L263 23.5 L263 26 Z" fill="url(#tg)"/><path d="M163 26 L170 7 Q171 4.5 174 4.5 L249 4.5 Q252 4.5 254 8 L263 23.5 L487 23.5" fill="none" stroke="#a0a0a0" stroke-width="1"/><path d="M86 26 L86 23.5 L96.5 6.5 Q97.8 4.5 100 4.5 L158 4.5 Q161.5 4.5 163.5 8 L173 23.5 L173 26 Z" fill="url(#tg)"/><path d="M86 23.5 L96.5 6.5 Q97.8 4.5 100 4.5 L158 4.5 Q161.5 4.5 163.5 8 L173 23.5" fill="none" stroke="#a0a0a0" stroke-width="1"/></svg>
<div class="ab" style="left:737px;top:68px;width:1px;height:764px;background:#a9a9a9"></div>
<div class="ab" style="left:737px;top:832px;width:487px;height:1px;background:#a9a9a9"></div>
<svg class="ab" style="left:754px;top:51px" width="14" height="16" viewBox="0 0 14 16"><path d="M5 1 L11 1 L13 3 L13 12 L5 12 Z" fill="#efe9dc" stroke="#c9bfae" stroke-width=".8"/><path d="M1 4 L7 4 L9 6 L9 15 L1 15 Z" fill="#f3eee2" stroke="#c9bfae" stroke-width=".8"/></svg>
<div class="ab" style="left:771px;top:51px;font-size:12px;color:#10104a;white-space:nowrap"><span class="s" style="transform:scaleX(.88);transform-origin:0 0">Généralités</span></div>
<svg class="ab" style="left:836px;top:51px" width="14" height="16" viewBox="0 0 14 16"><rect x="0" y="3" width="3" height="11" rx="1" fill="#b23c12"/><rect x="0.6" y="3.3" width="1.8" height="1" fill="#f0c0a0"/><rect x="2.9" y="1.7" width="8.3" height="13.5" rx="1.2" fill="#1a98e6"/><rect x="3.6" y="2.2" width="7" height="1.2" fill="#cfe8f8"/><rect x="7" y="7.3" width="5.1" height="8.1" rx="1" fill="#48cc22"/><rect x="7.6" y="7.6" width="4" height="1" fill="#d8f5c8"/></svg>
<div class="ab" style="left:853px;top:52px;font-size:11.5px;font-weight:bold;letter-spacing:.3px;color:#000;white-space:nowrap">Des.Art.</div>
<svg class="ab" style="left:908px;top:53px" width="16" height="10" viewBox="0 0 16 10"><ellipse cx="7.5" cy="8.5" rx="7" ry="1.3" fill="#505050"/><rect x="0.5" y="0.5" width="15" height="7.6" rx="3" fill="#e2e2e2" stroke="#a8a8a8" stroke-width="1"/><circle cx="12" cy="4.3" r="1.7" fill="#0f2a12"/></svg>
<div class="ab" style="left:927px;top:51px;font-size:12px;color:#10104a;white-space:nowrap"><span class="s" style="transform:scaleX(.88);transform-origin:0 0">Qui, Quand ?</span></div>
<div class="ab" style="left:680px;top:75px;width:135px;text-align:right;font-size:12px;white-space:nowrap"><span class="s" style="transform:scaleX(0.88);transform-origin:100% 0">Type Article</span></div>
<div class="ab" style="left:831px;top:75px;font-size:12px;white-space:nowrap;"><span class="s" style="transform:scaleX(0.88);transform-origin:0 0">R</span></div>
<div class="ab" style="left:853px;top:74px;width:14px;height:14px;background:#fff;border:2px solid #c6c6c6;font-weight:bold;font-size:12px;text-align:center;line-height:11px">?</div>
<div class="ab" style="left:873px;top:75px;font-size:12px;white-space:nowrap;"><span class="s" style="transform:scaleX(0.88);transform-origin:0 0">Art. Standard</span></div>
<div class="ab" style="left:680px;top:94px;width:135px;text-align:right;font-size:12px;white-space:nowrap"><span class="s" style="transform:scaleX(0.88);transform-origin:100% 0">Réf. Article</span></div>
<div class="ab" style="left:831px;top:94px;font-size:12px;white-space:nowrap;"><span class="s" style="transform:scaleX(0.88);transform-origin:0 0">1010412</span></div>
<div class="ab" style="left:1033px;top:93px;width:14px;height:14px;background:#fff;border:2px solid #c6c6c6;font-weight:bold;font-size:12px;text-align:center;line-height:11px">?</div>
<div class="ab" style="left:1053px;top:94px;font-size:12px;white-space:nowrap;"><span class="s" style="transform:scaleX(0.88);transform-origin:0 0">Dormant DC HI OV avec BTC</span></div>
<div class="ab" style="left:680px;top:113px;width:135px;text-align:right;font-size:12px;white-space:nowrap"><span class="s" style="transform:scaleX(0.88);transform-origin:100% 0">Numéro Cde</span></div>
<div class="ab" style="left:744px;top:132px;width:66px;overflow:hidden;font-size:12px;white-space:nowrap"><span class="s" style="transform:scaleX(0.88);transform-origin:0 0">Numéro LigCde</span></div>
<div class="ab" style="left:680px;top:151px;width:135px;text-align:right;font-size:12px;white-space:nowrap"><span class="s" style="transform:scaleX(0.88);transform-origin:100% 0">Date Prév. Del</span></div>
<div class="ab" style="left:827px;top:149px;width:90px;height:17px;background:#fff;border:1px solid #7c7c7c"></div>
<div class="ab" style="left:830px;top:152px;font-family:'Liberation Mono',monospace;font-size:11.5px;color:#1c1426;white-space:nowrap;">14/02/2024</div>
<div class="ab" style="left:920px;top:150px;width:14px;height:14px;background:#fff;border:2px solid #c6c6c6;font-weight:bold;font-size:12px;text-align:center;line-height:11px">?</div>
<div class="ab" style="left:680px;top:170px;width:135px;text-align:right;font-size:12px;white-space:nowrap"><span class="s" style="transform:scaleX(0.88);transform-origin:100% 0">Date Prév. Fin</span></div>
<div class="ab" style="left:827px;top:168px;width:90px;height:17px;background:#fff;border:1px solid #7c7c7c"></div>
<div class="ab" style="left:830px;top:171px;font-family:'Liberation Mono',monospace;font-size:11.5px;color:#1c1426;white-space:nowrap;">16/02/2024</div>
<div class="ab" style="left:920px;top:169px;width:14px;height:14px;background:#fff;border:2px solid #c6c6c6;font-weight:bold;font-size:12px;text-align:center;line-height:11px">?</div>
<div class="ab" style="left:680px;top:189px;width:135px;text-align:right;font-size:12px;white-space:nowrap"><span class="s" style="transform:scaleX(0.88);transform-origin:100% 0">Date Réel Dé··</span></div>
<div class="ab" style="left:830px;top:190px;font-family:'Liberation Mono',monospace;font-size:11.5px;color:#1c1426;white-space:nowrap;">10/01/2024</div>
<div class="ab" style="left:920px;top:188px;width:14px;height:14px;background:#fff;border:2px solid #c6c6c6;font-weight:bold;font-size:12px;text-align:center;line-height:11px">?</div>
<div class="ab" style="left:680px;top:208px;width:135px;text-align:right;font-size:12px;white-space:nowrap"><span class="s" style="transform:scaleX(0.88);transform-origin:100% 0">Date Réel Fin</span></div>
<div class="ab" style="left:830px;top:209px;font-family:'Liberation Mono',monospace;font-size:11.5px;color:#1c1426;white-space:nowrap;">10/01/2024</div>
<div class="ab" style="left:920px;top:207px;width:14px;height:14px;background:#fff;border:2px solid #c6c6c6;font-weight:bold;font-size:12px;text-align:center;line-height:11px">?</div>
<div class="ab" style="left:680px;top:227px;width:135px;text-align:right;font-size:12px;white-space:nowrap"><span class="s" style="transform:scaleX(0.88);transform-origin:100% 0">Dat.MaD. / OF</span></div>
<div class="ab" style="left:920px;top:226px;width:14px;height:14px;background:#fff;border:2px solid #c6c6c6;font-weight:bold;font-size:12px;text-align:center;line-height:11px">?</div>
<div class="ab" style="left:680px;top:246px;width:135px;text-align:right;font-size:12px;white-space:nowrap"><span class="s" style="transform:scaleX(0.88);transform-origin:100% 0">Dat.Exp. / OF</span></div>
<div class="ab" style="left:920px;top:245px;width:14px;height:14px;background:#fff;border:2px solid #c6c6c6;font-weight:bold;font-size:12px;text-align:center;line-height:11px">?</div>
<div class="ab" style="left:680px;top:265px;width:135px;text-align:right;font-size:12px;white-space:nowrap"><span class="s" style="transform:scaleX(0.88);transform-origin:100% 0">Dat.Liv. / OF</span></div>
<div class="ab" style="left:920px;top:264px;width:14px;height:14px;background:#fff;border:2px solid #c6c6c6;font-weight:bold;font-size:12px;text-align:center;line-height:11px">?</div>
<div class="ab" style="left:680px;top:284px;width:135px;text-align:right;font-size:12px;white-space:nowrap"><span class="s" style="transform:scaleX(0.88);transform-origin:100% 0">UME Qté.</span></div>
<div class="ab" style="left:830px;top:284px;font-size:12px;white-space:nowrap;"><span class="s" style="transform:scaleX(0.88);transform-origin:0 0">b6</span></div>
<div class="ab" style="left:904px;top:284px;font-size:12px;white-space:nowrap;"><span class="s" style="transform:scaleX(0.88);transform-origin:0 0">Barre 6 m</span></div>
<div class="ab" style="left:680px;top:303px;width:135px;text-align:right;font-size:12px;white-space:nowrap"><span class="s" style="transform:scaleX(0.88);transform-origin:100% 0">OF Fabrique</span></div>
<svg class="ab" style="left:827px;top:304px" width="11" height="11" viewBox="0 0 11 11"><rect x=".5" y=".5" width="10" height="10" fill="#fff" stroke="#c9c9c9" stroke-width="1.1"/></svg>
<div class="ab" style="left:680px;top:322px;width:135px;text-align:right;font-size:12px;white-space:nowrap"><span class="s" style="transform:scaleX(0.88);transform-origin:100% 0">OF Part.Fab.</span></div>
<svg class="ab" style="left:827px;top:323px" width="11" height="11" viewBox="0 0 11 11"><rect x=".5" y=".5" width="10" height="10" fill="#fff" stroke="#c9c9c9" stroke-width="1.1"/><path d="M2.2 5.5 L4.4 7.8 L8.6 3" fill="none" stroke="#bdbdbd" stroke-width="1"/></svg>
<div class="ab" style="left:680px;top:341px;width:135px;text-align:right;font-size:12px;white-space:nowrap"><span class="s" style="transform:scaleX(0.88);transform-origin:100% 0">OF Débuté</span></div>
<svg class="ab" style="left:827px;top:342px" width="11" height="11" viewBox="0 0 11 11"><rect x=".5" y=".5" width="10" height="10" fill="#fff" stroke="#c9c9c9" stroke-width="1.1"/><path d="M2.2 5.5 L4.4 7.8 L8.6 3" fill="none" stroke="#bdbdbd" stroke-width="1"/></svg>
<div class="ab" style="left:680px;top:360px;width:135px;text-align:right;font-size:12px;white-space:nowrap"><span class="s" style="transform:scaleX(0.88);transform-origin:100% 0">Ges.Csa./OF</span></div>
<svg class="ab" style="left:827px;top:361px" width="11" height="11" viewBox="0 0 11 11"><rect x=".5" y=".5" width="10" height="10" fill="#fff" stroke="#c9c9c9" stroke-width="1.1"/></svg>
<div class="ab" style="left:680px;top:379px;width:135px;text-align:right;font-size:12px;white-space:nowrap"><span class="s" style="transform:scaleX(0.88);transform-origin:100% 0">Conso.Partiel.</span></div>
<svg class="ab" style="left:827px;top:380px" width="11" height="11" viewBox="0 0 11 11"><rect x=".5" y=".5" width="10" height="10" fill="#fff" stroke="#c9c9c9" stroke-width="1.1"/></svg>
<div class="ab" style="left:680px;top:398px;width:135px;text-align:right;font-size:12px;white-space:nowrap"><span class="s" style="transform:scaleX(0.88);transform-origin:100% 0">Conso.Complet</span></div>
<svg class="ab" style="left:827px;top:399px" width="11" height="11" viewBox="0 0 11 11"><rect x=".5" y=".5" width="10" height="10" fill="#fff" stroke="#c9c9c9" stroke-width="1.1"/></svg>
<div class="ab" style="left:680px;top:417px;width:135px;text-align:right;font-size:12px;white-space:nowrap"><span class="s" style="transform:scaleX(0.88);transform-origin:100% 0">Qté. Reste Pr··</span></div>
<div class="ab" style="left:827px;top:418px;font-family:'Liberation Mono',monospace;font-size:11.5px;color:#1c1426;white-space:nowrap;width:57px;text-align:right;">8,</div>
<div class="ab" style="left:680px;top:436px;width:135px;text-align:right;font-size:12px;white-space:nowrap"><span class="s" style="transform:scaleX(0.88);transform-origin:100% 0">Qté.Lan.</span></div>
<div class="ab" style="left:827px;top:434px;width:75px;height:17px;background:#fff;border:1px solid #7c7c7c"></div>
<div class="ab" style="left:827px;top:437px;font-family:'Liberation Mono',monospace;font-size:11.5px;color:#1c1426;white-space:nowrap;width:57px;text-align:right;">10,</div>
<div class="ab" style="left:680px;top:455px;width:135px;text-align:right;font-size:12px;white-space:nowrap"><span class="s" style="transform:scaleX(0.88);transform-origin:100% 0">Qté.Fab.</span></div>
<div class="ab" style="left:827px;top:456px;font-family:'Liberation Mono',monospace;font-size:11.5px;color:#1c1426;white-space:nowrap;width:57px;text-align:right;">2,</div>
<div class="ab" style="left:680px;top:474px;width:135px;text-align:right;font-size:12px;white-space:nowrap"><span class="s" style="transform:scaleX(0.88);transform-origin:100% 0">Qté.Sol.</span></div>
<div class="ab" style="left:827px;top:475px;font-family:'Liberation Mono',monospace;font-size:11.5px;color:#1c1426;white-space:nowrap;width:57px;text-align:right;">0,</div>
<div class="ab" style="left:680px;top:493px;width:135px;text-align:right;font-size:12px;white-space:nowrap"><span class="s" style="transform:scaleX(0.88);transform-origin:100% 0">Qté. Surplus</span></div>
<div class="ab" style="left:827px;top:494px;font-family:'Liberation Mono',monospace;font-size:11.5px;color:#1c1426;white-space:nowrap;width:57px;text-align:right;">0,</div>
<div class="ab" style="left:744px;top:512px;width:80px;overflow:hidden;font-size:12px;white-space:nowrap"><span class="s" style="transform:scaleX(0.88);transform-origin:0 0">Qté.Cdi. Défaut</span></div>
<div class="ab" style="left:827px;top:510px;width:105px;height:17px;background:#fff;border:1px solid #222"></div>
<div class="ab" style="left:827px;top:513px;font-family:'Liberation Mono',monospace;font-size:11.5px;color:#1c1426;white-space:nowrap;width:87px;text-align:right;">1,000</div>
<div class="ab" style="left:744px;top:531px;width:80px;overflow:hidden;font-size:12px;white-space:nowrap"><span class="s" style="transform:scaleX(0.88);transform-origin:0 0">Typ.Cdi. Défaut</span></div>
<div class="ab" style="left:827px;top:529px;width:90px;height:17px;background:#fff;border:1px solid #7c7c7c"></div>
<div class="ab" style="left:830px;top:531px;font-size:12px;white-space:nowrap;"><span class="s" style="transform:scaleX(0.88);transform-origin:0 0">DIV</span></div>
<div class="ab" style="left:920px;top:530px;width:14px;height:14px;background:#fff;border:2px solid #c6c6c6;font-weight:bold;font-size:12px;text-align:center;line-height:11px">?</div>
<div class="ab" style="left:941px;top:531px;font-size:12px;white-space:nowrap;"><span class="s" style="transform:scaleX(0.88);transform-origin:0 0">Divers</span></div>
<div class="ab" style="left:680px;top:550px;width:135px;text-align:right;font-size:12px;white-space:nowrap"><span class="s" style="transform:scaleX(0.88);transform-origin:100% 0">Condi.Fab.</span></div>
<div class="ab" style="left:827px;top:548px;width:90px;height:17px;background:#fff;border:1px solid #7c7c7c"></div>
<div class="ab" style="left:920px;top:549px;width:14px;height:14px;background:#fff;border:2px solid #c6c6c6;font-weight:bold;font-size:12px;text-align:center;line-height:11px">?</div>
<div class="ab" style="left:680px;top:569px;width:135px;text-align:right;font-size:12px;white-space:nowrap"><span class="s" style="transform:scaleX(0.88);transform-origin:100% 0">Uni.Fab.Nom.</span></div>
<div class="ab" style="left:827px;top:567px;width:90px;height:17px;background:#fff;border:1px solid #7c7c7c"></div>
<div class="ab" style="left:920px;top:568px;width:14px;height:14px;background:#fff;border:2px solid #c6c6c6;font-weight:bold;font-size:12px;text-align:center;line-height:11px">?</div>
<div class="ab" style="left:680px;top:588px;width:135px;text-align:right;font-size:12px;white-space:nowrap"><span class="s" style="transform:scaleX(0.88);transform-origin:100% 0">Cad.Ut.Fab.N··</span></div>
<div class="ab" style="left:827px;top:586px;width:90px;height:17px;background:#fff;border:1px solid #7c7c7c"></div>
<div class="ab" style="left:920px;top:587px;width:14px;height:14px;background:#fff;border:2px solid #c6c6c6;font-weight:bold;font-size:12px;text-align:center;line-height:11px">?</div>
<div class="ab" style="left:745px;top:607px;width:66px;overflow:hidden;font-size:12px;white-space:nowrap"><span class="s" style="transform:scaleX(0.88);transform-origin:0 0">Type Nom.Fab</span></div>
<div class="ab" style="left:827px;top:605px;width:90px;height:17px;background:#fff;border:1px solid #7c7c7c"></div>
<div class="ab" style="left:830px;top:607px;font-size:12px;white-space:nowrap;"><span class="s" style="transform:scaleX(0.88);transform-origin:0 0">0</span></div>
<div class="ab" style="left:920px;top:606px;width:14px;height:14px;background:#fff;border:2px solid #c6c6c6;font-weight:bold;font-size:12px;text-align:center;line-height:11px">?</div>
<div class="ab" style="left:941px;top:607px;font-size:12px;white-space:nowrap;"><span class="s" style="transform:scaleX(0.88);transform-origin:0 0">Nomenclatures Majeures</span></div>
<div class="ab" style="left:680px;top:626px;width:135px;text-align:right;font-size:12px;white-space:nowrap"><span class="s" style="transform:scaleX(0.88);transform-origin:100% 0">Doc.Cdi. Défa··</span></div>
<div class="ab" style="left:827px;top:624px;width:90px;height:17px;background:#fff;border:1px solid #7c7c7c"></div>
<div class="ab" style="left:920px;top:625px;width:14px;height:14px;background:#fff;border:2px solid #c6c6c6;font-weight:bold;font-size:12px;text-align:center;line-height:11px">?</div>
<div class="ab" style="left:744px;top:645px;width:63px;overflow:hidden;font-size:12px;white-space:nowrap"><span class="s" style="transform:scaleX(0.88);transform-origin:0 0">UME Déc.Fab</span></div>
<div class="ab" style="left:827px;top:643px;width:90px;height:17px;background:#0aa0ab;border:1px solid #2f80e0"></div>
<div class="ab" style="left:828px;top:644px;width:88px;height:15px;border:1px solid #e8f2fa"></div>
<div class="ab" style="left:830px;top:645px;font-size:12px;white-space:nowrap;"><span class="s" style="transform:scaleX(0.88);transform-origin:0 0">mm</span></div>
<div class="ab" style="left:920px;top:644px;width:14px;height:14px;background:#fff;border:2px solid #c6c6c6;font-weight:bold;font-size:12px;text-align:center;line-height:11px">?</div>
<div class="ab" style="left:941px;top:645px;font-size:12px;white-space:nowrap;"><span class="s" style="transform:scaleX(0.88);transform-origin:0 0">millimètre</span></div>
<div class="ab" style="left:846px;top:646px;width:1px;height:12px;background:#e03020"></div>
<div class="ab" style="left:893px;top:644px;width:1px;height:15px;background:#e8f4f6"></div>
<div class="ab" style="left:744px;top:664px;width:64px;overflow:hidden;font-size:12px;white-space:nowrap"><span class="s" style="transform:scaleX(0.88);transform-origin:0 0">Coe.Conv.UM</span></div>
<div class="ab" style="left:827px;top:662px;width:120px;height:17px;background:#fff;border:1px solid #7c7c7c"></div>
<div class="ab" style="left:827px;top:665px;font-family:'Liberation Mono',monospace;font-size:11.5px;color:#1c1426;white-space:nowrap;width:101px;text-align:right;">6000,000000</div>
<div class="ab" style="left:744px;top:683px;width:64px;overflow:hidden;font-size:12px;white-space:nowrap"><span class="s" style="transform:scaleX(0.88);transform-origin:0 0">Coe.Conv.UM</span></div>
<div class="ab" style="left:827px;top:681px;width:120px;height:17px;background:#fff;border:1px solid #7c7c7c"></div>
<div class="ab" style="left:827px;top:684px;font-family:'Liberation Mono',monospace;font-size:11.5px;color:#1c1426;white-space:nowrap;width:101px;text-align:right;">0,000000</div>
<div class="ab" style="left:680px;top:702px;width:135px;text-align:right;font-size:12px;white-space:nowrap"><span class="s" style="transform:scaleX(0.88);transform-origin:100% 0">Unité Pro.</span></div>
<div class="ab" style="left:830px;top:702px;font-size:12px;white-space:nowrap;"><span class="s" style="transform:scaleX(0.88);transform-origin:0 0">U1</span></div>
<div class="ab" style="left:920px;top:701px;width:14px;height:14px;background:#fff;border:2px solid #c6c6c6;font-weight:bold;font-size:12px;text-align:center;line-height:11px">?</div>
<div class="ab" style="left:941px;top:702px;font-size:12px;white-space:nowrap;"><span class="s" style="transform:scaleX(0.88);transform-origin:0 0">Site de production 1</span></div>
<div class="ab" style="left:744px;top:721px;width:80px;overflow:hidden;font-size:12px;white-space:nowrap"><span class="s" style="transform:scaleX(0.88);transform-origin:0 0">Gam.Geni.F.Att.</span></div>
<div class="ab" style="left:920px;top:720px;width:14px;height:14px;background:#fff;border:2px solid #c6c6c6;font-weight:bold;font-size:12px;text-align:center;line-height:11px">?</div>
<div class="ab" style="left:680px;top:740px;width:135px;text-align:right;font-size:12px;white-space:nowrap"><span class="s" style="transform:scaleX(0.88);transform-origin:100% 0">Nb.Eta.Fi.Att.</span></div>
<div class="ab" style="left:851px;top:741px;font-family:'Liberation Mono',monospace;font-size:11.5px;color:#1c1426;white-space:nowrap;">0</div>
<div class="ab" style="left:680px;top:759px;width:135px;text-align:right;font-size:12px;white-space:nowrap"><span class="s" style="transform:scaleX(0.88);transform-origin:100% 0">Gamme CdC.··</span></div>
<div class="ab" style="left:680px;top:778px;width:135px;text-align:right;font-size:12px;white-space:nowrap"><span class="s" style="transform:scaleX(0.88);transform-origin:100% 0">Ges.Co-Pro.</span></div>
<svg class="ab" style="left:827px;top:779px" width="11" height="11" viewBox="0 0 11 11"><rect x=".5" y=".5" width="10" height="10" fill="#fff" stroke="#333" stroke-width="1.1"/></svg>
<div class="ab" style="left:680px;top:797px;width:135px;text-align:right;font-size:12px;white-space:nowrap"><span class="s" style="transform:scaleX(0.88);transform-origin:100% 0">Art. Co-Prod.</span></div>
<div class="ab" style="left:827px;top:795px;width:400px;height:33px;background:#fff;border:1px solid #7c7c7c;border-right:none;border-bottom:none"></div>
<div class="ab" style="left:743px;top:838px;width:76px;height:24px;background:#e1e1e1;border:1px solid #adadad"><svg class="ab" style="left:13px;top:5px" width="13" height="11" viewBox="0 0 13 11"><path d="M1.5 5.5 L5 9 L11.5 1.5" fill="none" stroke="#2aa6b7" stroke-width="2.4"/></svg><span class="ab s" style="left:30px;top:3px;font-size:12px;transform:scaleX(.88);transform-origin:0 0">Valider</span></div>
<div class="ab" style="left:823px;top:838px;width:76px;height:24px;background:#cccccc;border:1px solid #bfbfbf"><span class="ab s" style="left:8px;top:3px;font-size:12px;color:#8d8d8d;transform:scaleX(.88);transform-origin:0 0">Sauvegarde</span></div>
<div class="ab" style="left:903px;top:838px;width:75px;height:24px;background:#e1e1e1;border:1px solid #adadad"><svg class="ab" style="left:11px;top:5px" width="12" height="12" viewBox="0 0 12 12"><path d="M1.5 1.5 L10.5 10.5 M10.5 1.5 L1.5 10.5" stroke="#e5532d" stroke-width="2.4"/></svg><span class="ab s" style="left:29px;top:3px;font-size:12px;transform:scaleX(.88);transform-origin:0 0">Annuler</span></div>
</body></html>
